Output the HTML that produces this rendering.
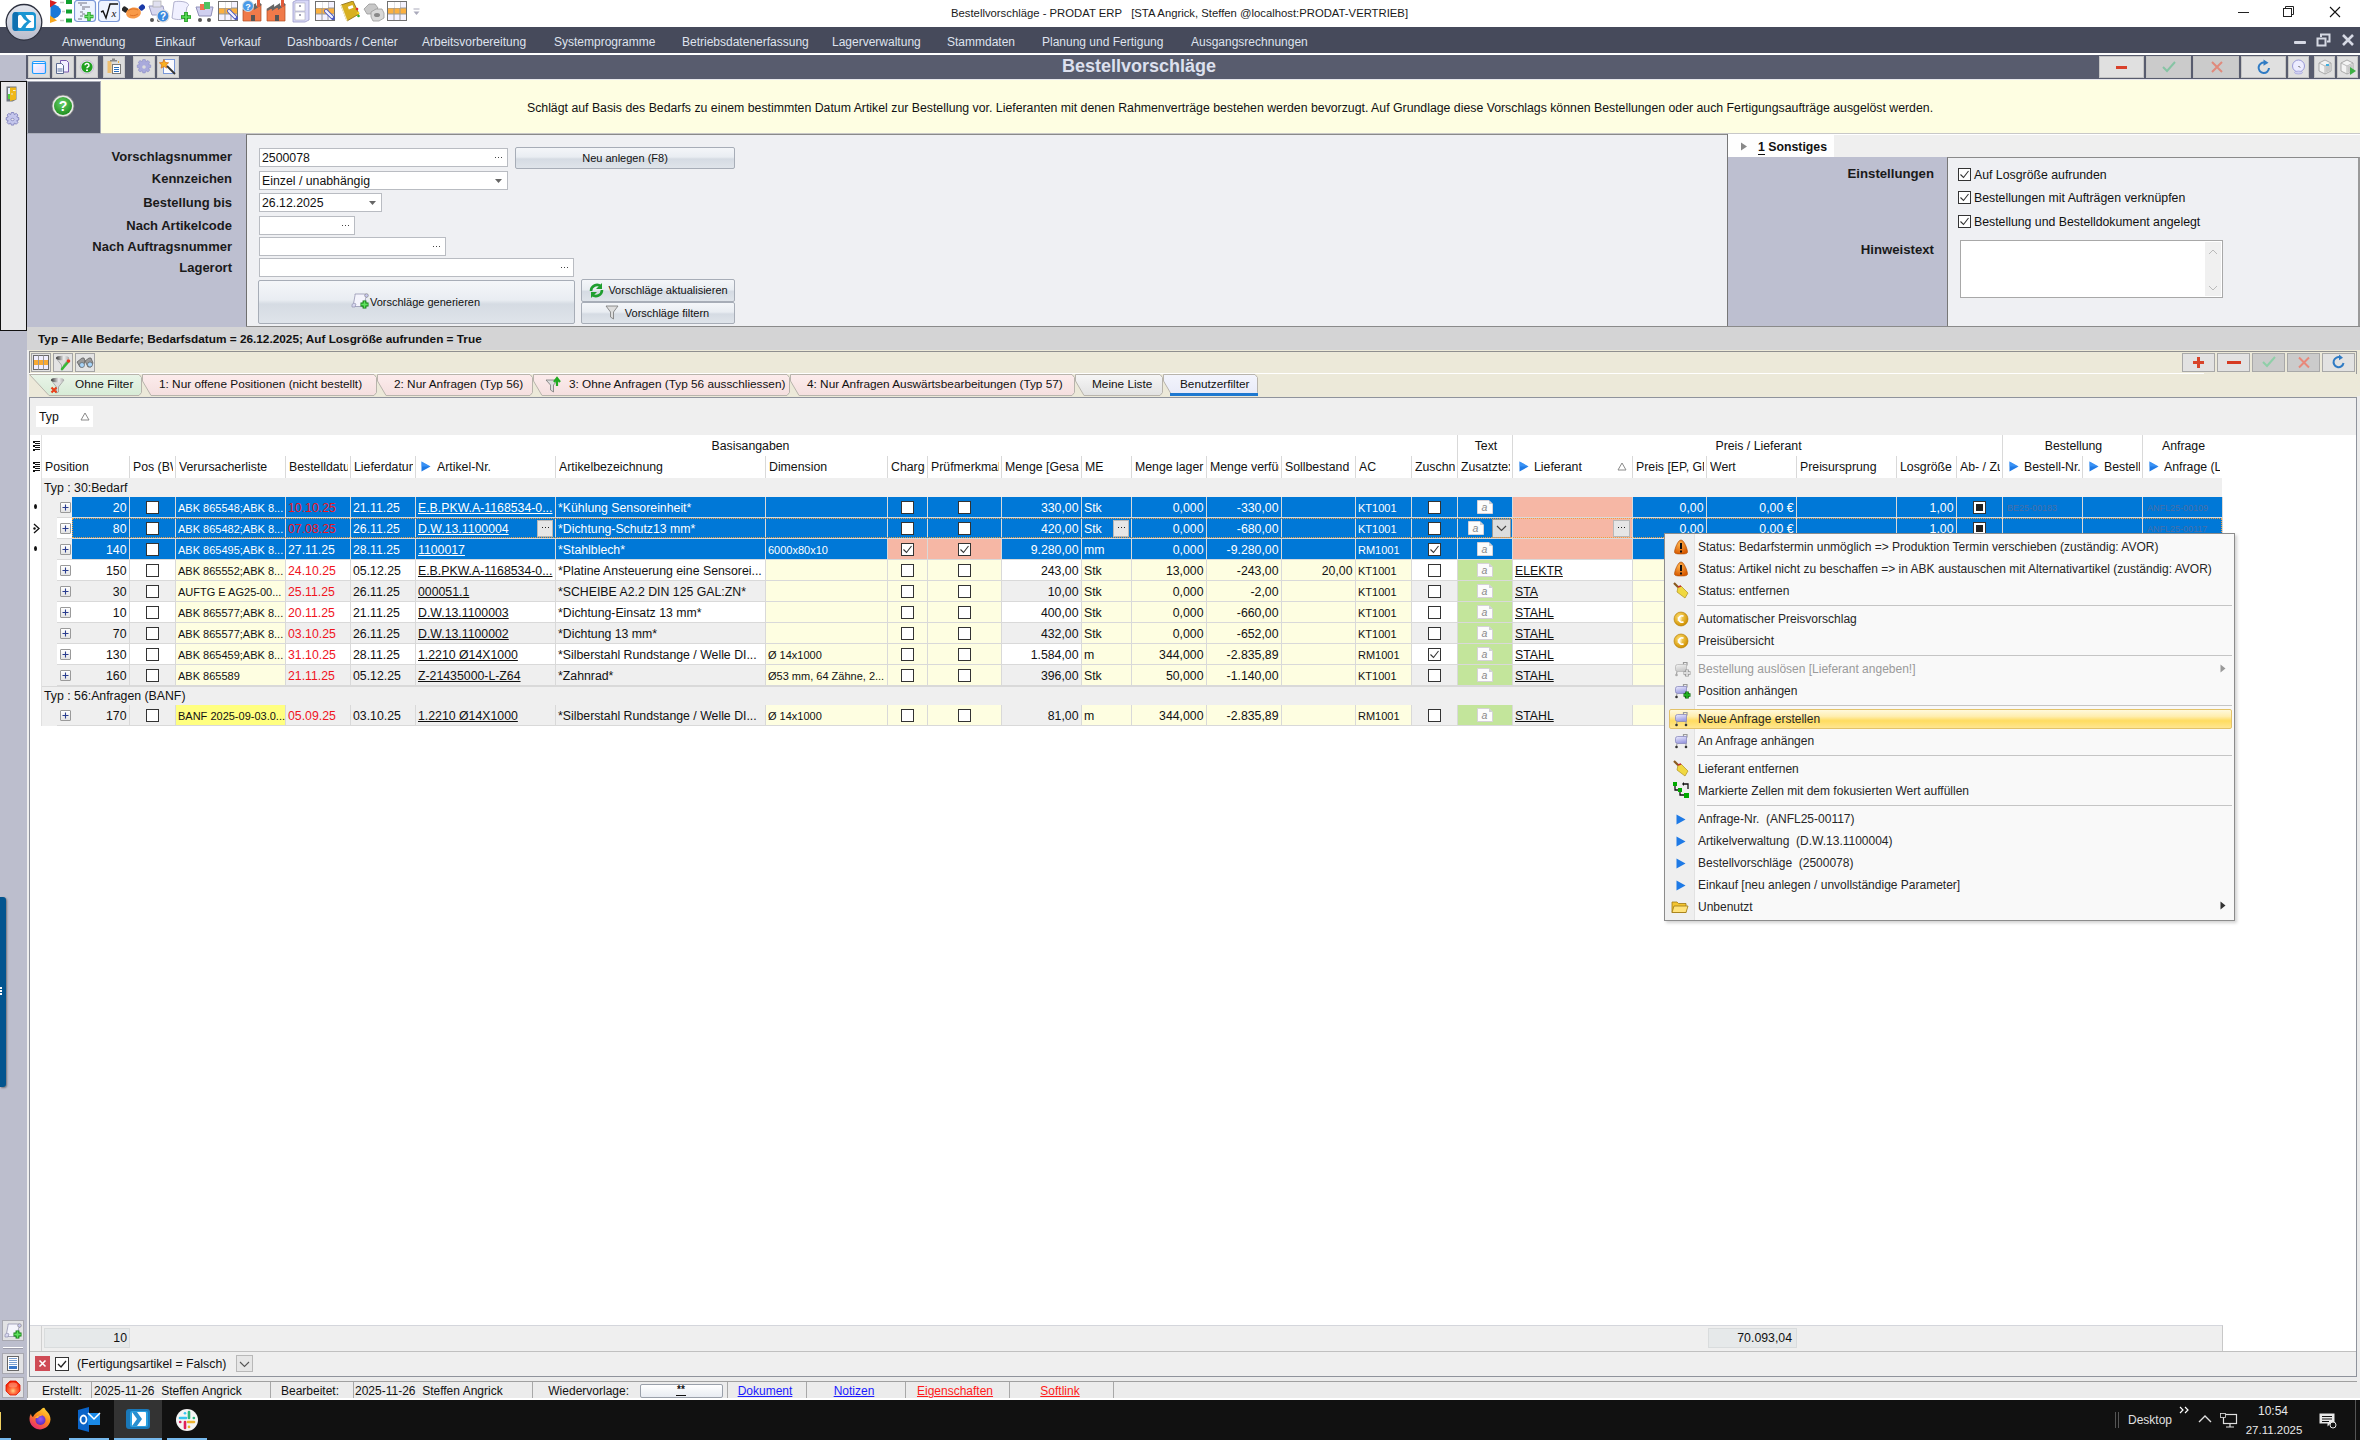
<!DOCTYPE html><html><head><meta charset="utf-8"><style>
html,body{margin:0;padding:0;}
body{width:2360px;height:1440px;overflow:hidden;position:relative;background:#fff;font-family:"Liberation Sans",sans-serif;}
div{position:absolute;box-sizing:border-box;}
</style></head><body>
<div style="left:0px;top:0px;width:2360px;height:27px;background:#fff;"></div>
<div style="left:0px;top:27px;width:2360px;height:26px;background:#464a5b;"></div>
<div style="left:0px;top:53px;width:2360px;height:2px;background:#fff;"></div>
<div style="left:0px;top:55px;width:26px;height:25px;background:#bcbecd;"></div>
<div style="left:26px;top:55px;width:2334px;height:25px;background:#585c6e;"></div>
<div style="left:26px;top:79px;width:2334px;height:1px;background:#e8e8ec;"></div>
<div style="left:951px;top:4.80px;height:16px;line-height:16px;font-size:11.3px;color:#1a1a1a;font-weight:400;white-space:pre;">Bestellvorschläge - PRODAT ERP   [STA Angrick, Steffen @localhost:PRODAT-VERTRIEB]</div>
<div style="left:2238px;top:12px;width:11px;height:1px;background:#222;"></div>
<svg style="position:absolute;left:2282px;top:5px;" width="14" height="14" viewBox="0 0 14 14"><rect x="1.5" y="3.5" width="8" height="8" fill="none" stroke="#222"/><path d="M3.5 3.5V1.5h8v8h-2" fill="none" stroke="#222"/></svg>
<svg style="position:absolute;left:2329px;top:6px;" width="12" height="12" viewBox="0 0 12 12"><path d="M1 1L11 11M11 1L1 11" stroke="#111" stroke-width="1.1"/></svg>
<div style="left:62px;top:34.10px;height:17px;line-height:17px;font-size:12px;color:#dfe3ee;font-weight:400;white-space:pre;">Anwendung</div>
<div style="left:155px;top:34.10px;height:17px;line-height:17px;font-size:12px;color:#dfe3ee;font-weight:400;white-space:pre;">Einkauf</div>
<div style="left:220px;top:34.10px;height:17px;line-height:17px;font-size:12px;color:#dfe3ee;font-weight:400;white-space:pre;">Verkauf</div>
<div style="left:287px;top:34.10px;height:17px;line-height:17px;font-size:12px;color:#dfe3ee;font-weight:400;white-space:pre;">Dashboards / Center</div>
<div style="left:422px;top:34.10px;height:17px;line-height:17px;font-size:12px;color:#dfe3ee;font-weight:400;white-space:pre;">Arbeitsvorbereitung</div>
<div style="left:554px;top:34.10px;height:17px;line-height:17px;font-size:12px;color:#dfe3ee;font-weight:400;white-space:pre;">Systemprogramme</div>
<div style="left:682px;top:34.10px;height:17px;line-height:17px;font-size:12px;color:#dfe3ee;font-weight:400;white-space:pre;">Betriebsdatenerfassung</div>
<div style="left:832px;top:34.10px;height:17px;line-height:17px;font-size:12px;color:#dfe3ee;font-weight:400;white-space:pre;">Lagerverwaltung</div>
<div style="left:947px;top:34.10px;height:17px;line-height:17px;font-size:12px;color:#dfe3ee;font-weight:400;white-space:pre;">Stammdaten</div>
<div style="left:1042px;top:34.10px;height:17px;line-height:17px;font-size:12px;color:#dfe3ee;font-weight:400;white-space:pre;">Planung und Fertigung</div>
<div style="left:1191px;top:34.10px;height:17px;line-height:17px;font-size:12px;color:#dfe3ee;font-weight:400;white-space:pre;">Ausgangsrechnungen</div>
<div style="left:2294px;top:41px;width:12px;height:3px;background:#d6d9e4;border-radius:1px;"></div>
<svg style="position:absolute;left:2316px;top:33px;" width="15" height="14" viewBox="0 0 15 14"><rect x="1.5" y="5.5" width="8" height="7" fill="none" stroke="#d6d9e4" stroke-width="2"/><path d="M5 4V1.5h8.5v7H11" fill="none" stroke="#d6d9e4" stroke-width="2"/></svg>
<svg style="position:absolute;left:2341px;top:33px;" width="14" height="14" viewBox="0 0 14 14"><path d="M2 2L12 12M12 2L2 12" stroke="#d6d9e4" stroke-width="2.6"/></svg>
<svg style="position:absolute;left:4px;top:2px;" width="40" height="40" viewBox="0 0 40 40"><defs><linearGradient id="lg" x1="0" y1="0" x2="0" y2="1"><stop offset="0" stop-color="#e4e7ef"/><stop offset="1" stop-color="#b8bccb"/></linearGradient></defs><circle cx="20" cy="20.3" r="17.8" fill="url(#lg)" stroke="#2e3240" stroke-width="1.3"/><rect x="8.5" y="10" width="23.5" height="19" rx="4" fill="#1a95d2"/><rect x="8.5" y="10" width="6" height="19" rx="3" fill="#0f70b0"/><rect x="14" y="13" width="16" height="13" rx="1.5" fill="#fff"/><path d="M17 13h4.5Q23 17 27.5 19.5Q23 22 21.5 26H17Q19 22 23 19.5Q19 17 17 13z" fill="#1a95d2"/></svg>
<div style="left:139px;width:2000px;text-align:center;top:54.30px;height:25px;line-height:25px;font-size:18px;color:#dde0ee;font-weight:700;white-space:pre;">Bestellvorschläge</div>
<div style="left:0px;top:80px;width:27px;height:1320px;background:#bcbecd;"></div>
<div style="left:0px;top:81px;width:27px;height:250px;background:#e9e9eb;border:1px solid #111;border-bottom:1px solid #111;"></div>
<svg style="position:absolute;left:6px;top:86px;" width="12" height="16" viewBox="0 0 12 16"><path d="M0.5 0.5h10v13l-4 2h-6z" fill="#707680"/><rect x="2" y="2" width="3" height="6" fill="#e8f4ff"/><rect x="2" y="8" width="3" height="5" fill="#50d040"/><path d="M4 1.5h6v12l-6 1.5z" fill="#f0b818"/><rect x="7" y="4" width="2.5" height="1" fill="#f8f0d0"/><circle cx="6" cy="8" r="0.8" fill="#e8e8f0"/></svg>
<svg style="position:absolute;left:5px;top:112px;" width="15" height="15" viewBox="0 0 15 15"><g transform="translate(7.5 7.5)"><path d="M-1.2 -7h2.4l.6 2 2-1.1 1.6 1.6-1.1 2 2 .6v2.4l-2 .6 1.1 2-1.6 1.6-2-1.1-.6 2h-2.4l-.6-2-2 1.1-1.6-1.6 1.1-2-2-.6v-2.4l2-.6-1.1-2 1.6-1.6 2 1.1z" fill="#c4c6ec" stroke="#6a6cb0" stroke-width="0.7"/><ellipse rx="1.6" ry="1.2" fill="#e9e9eb" stroke="#6a6cb0" stroke-width="0.6"/></g></svg>
<div style="left:28px;top:56px;width:22px;height:22px;background:#dcdcdc;border:1px solid #c8c8c8;"></div>
<div style="left:52px;top:56px;width:22px;height:22px;background:#dcdcdc;border:1px solid #c8c8c8;"></div>
<div style="left:76px;top:56px;width:22px;height:22px;background:#dcdcdc;border:1px solid #c8c8c8;"></div>
<div style="left:103px;top:56px;width:22px;height:22px;background:#dcdcdc;border:1px solid #c8c8c8;"></div>
<div style="left:133px;top:56px;width:22px;height:22px;background:#dcdcdc;border:1px solid #c8c8c8;"></div>
<div style="left:157px;top:56px;width:22px;height:22px;background:#dcdcdc;border:1px solid #c8c8c8;"></div>
<svg style="position:absolute;left:31px;top:59px;" width="16" height="16" viewBox="0 0 16 16"><defs><linearGradient id="wf" x1="0" y1="0" x2="1" y2="1"><stop offset="0" stop-color="#ffffff"/><stop offset="1" stop-color="#dcd4ff"/></linearGradient></defs><rect x="1.5" y="2.5" width="13" height="12" rx="1.5" fill="url(#wf)" stroke="#1e9cff" stroke-width="1.2"/><path d="M2 4.5h12" stroke="#1e9cff" stroke-width="1"/></svg>
<svg style="position:absolute;left:55px;top:59px;" width="16" height="16" viewBox="0 0 16 16"><path d="M5.5 1.5h6l2 2v9.5h-8z" fill="#f4f0ff" stroke="#7a5ab0" stroke-width="1"/><path d="M1.5 4.5h5l2 2v8h-7z" fill="#fafaff" stroke="#5a6a90" stroke-width="1"/><rect x="2.5" y="9" width="5" height="4" fill="#a8b4d0"/></svg>
<svg style="position:absolute;left:79px;top:59px;" width="16" height="16" viewBox="0 0 16 16"><circle cx="8" cy="8" r="6.8" fill="#e8e0f0" stroke="#b8a8c8" stroke-width="0.6"/><circle cx="8" cy="8" r="5.6" fill="#21a121"/><path d="M6 6.3a2 1.8 0 1 1 2.8 1.7c-.6.3-.8.6-.8 1.3" fill="none" stroke="#fff" stroke-width="1.5"/><rect x="7" y="10.5" width="2" height="1.5" fill="#fff"/></svg>
<svg style="position:absolute;left:106px;top:58px;" width="17" height="17" viewBox="0 0 17 17"><rect x="1.5" y="3" width="4" height="12" fill="#f0c070"/><rect x="4" y="2" width="7" height="1.5" fill="#888"/><rect x="6" y="0.5" width="3" height="2" fill="#888"/><rect x="12" y="3" width="1" height="2" fill="#f0b040"/><rect x="6.5" y="6.5" width="8" height="9" fill="#fff" stroke="#777" stroke-width="1"/><path d="M8 9.5h5M8 11.5h5M8 13.5h5" stroke="#2a70c0" stroke-width="1"/></svg>
<svg style="position:absolute;left:135px;top:58px;" width="18" height="18" viewBox="0 0 18 18"><g transform="translate(9 9)"><path d="M-1.2 -7.5h2.4l.6 2.2 2.2-1.2 1.7 1.7-1.2 2.2 2.2.6v2.4l-2.2.6 1.2 2.2-1.7 1.7-2.2-1.2-.6 2.2h-2.4l-.6-2.2-2.2 1.2-1.7-1.7 1.2-2.2-2.2-.6v-2.4l2.2-.6-1.2-2.2 1.7-1.7 2.2 1.2z" fill="#a9aadc" stroke="#8a8cc4" stroke-width="0.6"/><circle r="1.8" fill="#dcdcdc"/></g></svg>
<svg style="position:absolute;left:159px;top:58px;" width="18" height="18" viewBox="0 0 18 18"><rect x="4.5" y="1.5" width="11" height="14" fill="#fbfbff" stroke="#7a98d8" stroke-width="1"/><path d="M5 1.5l1.4 3 3.2.3-2.4 2.1.7 3.2L5 8.5l-2.9 1.6.7-3.2L0.4 4.8l3.2-.3z" fill="#f8b020" stroke="#d86a10" stroke-width="0.7"/><path d="M8 8l8 8" stroke="#333" stroke-width="1.8"/></svg>
<div style="left:2099px;top:56px;width:45px;height:22px;background:#e0e0e0;border:1px solid #c4c4c4;"></div>
<div style="left:2146px;top:56px;width:45px;height:22px;background:#cbcbcb;border:1px solid #c4c4c4;"></div>
<div style="left:2193px;top:56px;width:46px;height:22px;background:#cbcbcb;border:1px solid #c4c4c4;"></div>
<div style="left:2241px;top:56px;width:45px;height:22px;background:#e0e0e0;border:1px solid #c4c4c4;"></div>
<div style="left:2288px;top:56px;width:21px;height:22px;background:#e0e0e0;border:1px solid #c4c4c4;"></div>
<div style="left:2314px;top:56px;width:21px;height:22px;background:#e0e0e0;border:1px solid #c4c4c4;"></div>
<div style="left:2337px;top:56px;width:21px;height:22px;background:#e0e0e0;border:1px solid #c4c4c4;"></div>
<div style="left:2116px;top:66px;width:11px;height:3px;background:#d9412b;"></div>
<svg style="position:absolute;left:2161px;top:60px;" width="16" height="14" viewBox="0 0 16 14"><path d="M2 7l4 4 8-9" fill="none" stroke="#86c4a4" stroke-width="2"/></svg>
<svg style="position:absolute;left:2210px;top:60px;" width="14" height="14" viewBox="0 0 14 14"><path d="M2 2L12 12M12 2L2 12" stroke="#e08a7c" stroke-width="2"/></svg>
<svg style="position:absolute;left:2256px;top:59px;" width="16" height="16" viewBox="0 0 16 16"><path d="M13 9A5.2 5.2 0 1 1 8.5 3.6" fill="none" stroke="#2f7bc4" stroke-width="2"/><path d="M7.5 0.5l5 3.2-5 3z" fill="#2f7bc4"/></svg>
<svg style="position:absolute;left:2291px;top:59px;" width="15" height="16" viewBox="0 0 15 16"><circle cx="7.5" cy="7" r="6" fill="#ececff" stroke="#9a9ad8" stroke-width="1"/><path d="M7.5 7l1.5 1.5" stroke="#444" stroke-width="1"/><ellipse cx="7.5" cy="13.5" rx="4" ry="1.5" fill="#d0d0f0" stroke="#9a9ad8" stroke-width="0.6"/></svg>
<svg style="position:absolute;left:2316px;top:58px;" width="18" height="18" viewBox="0 0 18 18"><path d="M3 5l6-3 6 3v8l-6 3-6-3z" fill="#f4f4f4" stroke="#999" stroke-width="0.8"/><path d="M3 5l6 3 6-3M9 8v8" fill="none" stroke="#aaa" stroke-width="0.8"/><path d="M9.5 8.5l5-2.5v6.5l-5 2.5z" fill="#c8c8c8"/><rect x="10" y="6" width="3" height="2" fill="#40b0e0"/></svg>
<svg style="position:absolute;left:2339px;top:58px;" width="19" height="18" viewBox="0 0 19 18"><path d="M2 5l6-3 6 3v8l-6 3-6-3z" fill="#f4f4f4" stroke="#999" stroke-width="0.8"/><path d="M2 5l6 3 6-3M8 8v8" fill="none" stroke="#aaa" stroke-width="0.8"/><path d="M8.5 8.5l5-2.5v6.5l-5 2.5z" fill="#c8c8c8"/><path d="M11 9v8l6-4z" fill="#3cb044"/></svg>
<div style="left:27px;top:81px;width:74px;height:53px;background:#585c6e;border:1px solid #a9acb8;"></div>
<svg style="position:absolute;left:51px;top:94px;" width="24" height="24" viewBox="0 0 24 24"><defs><radialGradient id="hg" cx="45%" cy="35%" r="65%"><stop offset="0" stop-color="#6ad06a"/><stop offset="1" stop-color="#1f8f1f"/></radialGradient></defs><circle cx="12" cy="12" r="11" fill="#e8e8e8" stroke="#777" stroke-width="0.8"/><circle cx="12" cy="12" r="9" fill="url(#hg)"/><text x="12" y="17" font-size="14" font-weight="700" fill="#fff" text-anchor="middle" font-family="Liberation Sans">?</text></svg>
<div style="left:101px;top:80px;width:2259px;height:54px;background:#fefee2;"></div>
<div style="left:101px;top:133px;width:2259px;height:1px;background:#c8c8c8;"></div>
<div style="left:230px;width:2000px;text-align:center;top:100.30px;height:17px;line-height:17px;font-size:12.3px;color:#111;font-weight:400;white-space:pre;">Schlägt auf Basis des Bedarfs zu einem bestimmten Datum Artikel zur Bestellung vor. Lieferanten mit denen Rahmenverträge bestehen werden bevorzugt. Auf Grundlage diese Vorschlags können Bestellungen oder auch Fertigungsaufträge ausgelöst werden.</div>
<div style="left:27px;top:134px;width:220px;height:193px;background:#bdbfd0;"></div>
<div style="left:246px;top:134px;width:1482px;height:193px;background:#eff0f3;border-left:1px solid #6f6f6f;border-top:1px solid #8a8a8a;"></div>
<div style="left:-768px;width:1000px;text-align:right;top:148.30px;height:18px;line-height:18px;font-size:13px;color:#1a1a1a;font-weight:700;white-space:pre;">Vorschlagsnummer</div>
<div style="left:-768px;width:1000px;text-align:right;top:169.80px;height:18px;line-height:18px;font-size:13px;color:#1a1a1a;font-weight:700;white-space:pre;">Kennzeichen</div>
<div style="left:-768px;width:1000px;text-align:right;top:193.80px;height:18px;line-height:18px;font-size:13px;color:#1a1a1a;font-weight:700;white-space:pre;">Bestellung bis</div>
<div style="left:-768px;width:1000px;text-align:right;top:216.80px;height:18px;line-height:18px;font-size:13px;color:#1a1a1a;font-weight:700;white-space:pre;">Nach Artikelcode</div>
<div style="left:-768px;width:1000px;text-align:right;top:237.80px;height:18px;line-height:18px;font-size:13px;color:#1a1a1a;font-weight:700;white-space:pre;">Nach Auftragsnummer</div>
<div style="left:-768px;width:1000px;text-align:right;top:258.80px;height:18px;line-height:18px;font-size:13px;color:#1a1a1a;font-weight:700;white-space:pre;">Lagerort</div>
<div style="left:259px;top:148px;width:249px;height:19px;background:#fff;border:1px solid #b9bcc2;"></div>
<div style="left:495px;top:157px;width:1px;height:1px;background:#444;"></div>
<div style="left:498px;top:157px;width:1px;height:1px;background:#444;"></div>
<div style="left:501px;top:157px;width:1px;height:1px;background:#444;"></div>
<div style="left:262px;top:149.80px;height:17px;line-height:17px;font-size:12.3px;color:#111;font-weight:400;white-space:pre;">2500078</div>
<div style="left:259px;top:171px;width:249px;height:19px;background:#fff;border:1px solid #b9bcc2;"></div>
<svg style="position:absolute;left:495px;top:178.5px;" width="8" height="5" viewBox="0 0 8 5"><path d="M0 0h7L3.5 4z" fill="#666"/></svg>
<div style="left:262px;top:172.80px;height:17px;line-height:17px;font-size:12.3px;color:#111;font-weight:400;white-space:pre;">Einzel / unabhängig</div>
<div style="left:259px;top:193px;width:123px;height:19px;background:#fff;border:1px solid #b9bcc2;"></div>
<svg style="position:absolute;left:369px;top:200.5px;" width="8" height="5" viewBox="0 0 8 5"><path d="M0 0h7L3.5 4z" fill="#666"/></svg>
<div style="left:262px;top:194.80px;height:17px;line-height:17px;font-size:12.3px;color:#111;font-weight:400;white-space:pre;">26.12.2025</div>
<div style="left:259px;top:216px;width:96px;height:19px;background:#fff;border:1px solid #b9bcc2;"></div>
<div style="left:342px;top:225px;width:1px;height:1px;background:#444;"></div>
<div style="left:345px;top:225px;width:1px;height:1px;background:#444;"></div>
<div style="left:348px;top:225px;width:1px;height:1px;background:#444;"></div>
<div style="left:259px;top:237px;width:187px;height:19px;background:#fff;border:1px solid #b9bcc2;"></div>
<div style="left:433px;top:246px;width:1px;height:1px;background:#444;"></div>
<div style="left:436px;top:246px;width:1px;height:1px;background:#444;"></div>
<div style="left:439px;top:246px;width:1px;height:1px;background:#444;"></div>
<div style="left:259px;top:258px;width:315px;height:19px;background:#fff;border:1px solid #b9bcc2;"></div>
<div style="left:561px;top:267px;width:1px;height:1px;background:#444;"></div>
<div style="left:564px;top:267px;width:1px;height:1px;background:#444;"></div>
<div style="left:567px;top:267px;width:1px;height:1px;background:#444;"></div>
<div style="left:515px;top:147px;width:220px;height:22px;background:linear-gradient(#f4f6f9 0%,#e9edf2 45%,#d5dbe3 55%,#dfe4ea 100%);border:1px solid #a7adb7;border-radius:2px;"></div>
<div style="left:-375px;width:2000px;text-align:center;top:150.80px;height:15px;line-height:15px;font-size:11px;color:#111;font-weight:400;white-space:pre;">Neu anlegen (F8)</div>
<div style="left:258px;top:280px;width:317px;height:44px;background:linear-gradient(#f4f6f9 0%,#e9edf2 45%,#d5dbe3 55%,#dfe4ea 100%);border:1px solid #a7adb7;border-radius:2px;"></div>
<div style="left:-575px;width:2000px;text-align:center;top:294.80px;height:15px;line-height:15px;font-size:11px;color:#111;font-weight:400;white-space:pre;">Vorschläge generieren</div>
<svg style="position:absolute;left:351px;top:292px;" width="19" height="17" viewBox="0 0 19 17"><path d="M4 2h9c2 0 3 1 2.5 3l-1 1.5-1 8H2l2-11z" fill="#f4f4fc" stroke="#8888a8" stroke-width="0.7"/><path d="M1 13c0-2 3-2 4-1l-1 3H1z" fill="#d8d8f0" stroke="#8888a8" stroke-width="0.6"/><circle cx="15.5" cy="3.5" r="1.8" fill="#c8c8f0" stroke="#777" stroke-width="0.6"/><path d="M13.5 8.5v8M9.5 12.5h8" stroke="#0a7a0a" stroke-width="3.8"/><path d="M13.5 9.2v6.6M10.2 12.5h6.6" stroke="#5fe05f" stroke-width="1.8"/></svg>
<div style="left:581px;top:279px;width:154px;height:23px;background:linear-gradient(#f4f6f9 0%,#e9edf2 45%,#d5dbe3 55%,#dfe4ea 100%);border:1px solid #a7adb7;border-radius:2px;"></div>
<div style="left:-332px;width:2000px;text-align:center;top:283.30px;height:15px;line-height:15px;font-size:11px;color:#111;font-weight:400;white-space:pre;">Vorschläge aktualisieren</div>
<svg style="position:absolute;left:588px;top:282px;" width="17" height="17" viewBox="0 0 17 17"><path d="M3 9a6 6 0 0 1 10-4.5" fill="none" stroke="#1f9e2f" stroke-width="2.6"/><path d="M14 1v6H8z" fill="#1f9e2f"/><path d="M14 8a6 6 0 0 1-10 4.5" fill="none" stroke="#1f9e2f" stroke-width="2.6"/><path d="M3 16v-6h6z" fill="#1f9e2f"/></svg>
<div style="left:581px;top:302px;width:154px;height:22px;background:linear-gradient(#f4f6f9 0%,#e9edf2 45%,#d5dbe3 55%,#dfe4ea 100%);border:1px solid #a7adb7;border-radius:2px;"></div>
<div style="left:-333px;width:2000px;text-align:center;top:305.80px;height:15px;line-height:15px;font-size:11px;color:#111;font-weight:400;white-space:pre;">Vorschläge filtern</div>
<svg style="position:absolute;left:605px;top:304px;" width="14" height="16" viewBox="0 0 14 16"><path d="M1 2h12l-4.5 6v7l-3-2V8z" fill="#ddd" stroke="#777" stroke-width="0.8"/></svg>
<div style="left:1728px;top:135px;width:632px;height:192px;background:#efefef;"></div>
<div style="left:1727px;top:134px;width:1px;height:193px;background:#777;"></div>
<div style="left:1728px;top:135px;width:106px;height:22px;background:#fefefe;"></div>
<svg style="position:absolute;left:1740px;top:142px;" width="8" height="9" viewBox="0 0 8 9"><path d="M1 0.5l6 4-6 4z" fill="#888"/></svg>
<div style="left:1758px;top:139.30px;height:17px;line-height:17px;font-size:12.3px;color:#111;font-weight:700;white-space:pre;">1 Sonstiges</div>
<div style="left:1758px;top:154px;width:7px;height:1px;background:#111;"></div>
<div style="left:1728px;top:157px;width:220px;height:170px;background:#bdbfd0;"></div>
<div style="left:1947px;top:157px;width:413px;height:170px;background:#eff0f3;border-left:1px solid #777;border-top:1px solid #8a8a8a;border-right:2px solid #9a9a9a;"></div>
<div style="left:934px;width:1000px;text-align:right;top:164.80px;height:18px;line-height:18px;font-size:13.2px;color:#1a1a1a;font-weight:700;white-space:pre;">Einstellungen</div>
<div style="left:934px;width:1000px;text-align:right;top:240.80px;height:18px;line-height:18px;font-size:13.2px;color:#1a1a1a;font-weight:700;white-space:pre;">Hinweistext</div>
<div style="left:1958px;top:168px;width:13px;height:13px;background:#fff;border:1px solid #333;"></div>
<svg style="position:absolute;left:1959px;top:169px;" width="11" height="11" viewBox="0 0 11 11"><path d="M1.5 5.5l3 3 5-6.5" fill="none" stroke="#333" stroke-width="1.1"/></svg>
<div style="left:1974px;top:166.80px;height:17px;line-height:17px;font-size:12.3px;color:#111;font-weight:400;white-space:pre;">Auf Losgröße aufrunden</div>
<div style="left:1958px;top:191px;width:13px;height:13px;background:#fff;border:1px solid #333;"></div>
<svg style="position:absolute;left:1959px;top:192px;" width="11" height="11" viewBox="0 0 11 11"><path d="M1.5 5.5l3 3 5-6.5" fill="none" stroke="#333" stroke-width="1.1"/></svg>
<div style="left:1974px;top:189.80px;height:17px;line-height:17px;font-size:12.3px;color:#111;font-weight:400;white-space:pre;">Bestellungen mit Aufträgen verknüpfen</div>
<div style="left:1958px;top:215px;width:13px;height:13px;background:#fff;border:1px solid #333;"></div>
<svg style="position:absolute;left:1959px;top:216px;" width="11" height="11" viewBox="0 0 11 11"><path d="M1.5 5.5l3 3 5-6.5" fill="none" stroke="#333" stroke-width="1.1"/></svg>
<div style="left:1974px;top:213.80px;height:17px;line-height:17px;font-size:12.3px;color:#111;font-weight:400;white-space:pre;">Bestellung und Bestelldokument angelegt</div>
<div style="left:1960px;top:240px;width:263px;height:58px;background:#fff;border:1px solid #a8a8a8;"></div>
<div style="left:2205px;top:242px;width:16px;height:54px;background:#f0f0f0;"></div>
<svg style="position:absolute;left:2207px;top:248px;" width="12" height="8" viewBox="0 0 12 8"><path d="M2 6l4-4 4 4" fill="none" stroke="#bbb"/></svg>
<svg style="position:absolute;left:2207px;top:284px;" width="12" height="8" viewBox="0 0 12 8"><path d="M2 2l4 4 4-4" fill="none" stroke="#bbb"/></svg>
<div style="left:246px;top:326px;width:2114px;height:1px;background:#8a8a8a;"></div>
<div style="left:27px;top:327px;width:2333px;height:23px;background:#d4d4d5;"></div>
<div style="left:38px;top:330.80px;height:17px;line-height:17px;font-size:11.8px;color:#111;font-weight:700;white-space:pre;">Typ = Alle Bedarfe; Bedarfsdatum = 26.12.2025; Auf Losgröße aufrunden = True</div>
<div style="left:27px;top:350px;width:2333px;height:24px;background:#ece9d9;"></div>
<div style="left:27px;top:350px;width:2px;height:1030px;background:#efefef;"></div>
<div style="left:29px;top:351px;width:2328px;height:1px;background:#8f8f8f;"></div>
<div style="left:29px;top:351px;width:1px;height:23px;background:#8f8f8f;"></div>
<div style="left:29px;top:373px;width:2175px;height:1px;background:#ffffff;"></div>
<div style="left:31px;top:353px;width:20px;height:19px;background:#e3e3e3;border:1px solid #a4a4a4;"></div>
<div style="left:53px;top:353px;width:20px;height:19px;background:#e3e3e3;border:1px solid #a4a4a4;"></div>
<div style="left:75px;top:353px;width:20px;height:19px;background:#e3e3e3;border:1px solid #a4a4a4;"></div>
<svg style="position:absolute;left:33px;top:355px;" width="16" height="15" viewBox="0 0 16 15"><rect x="0.5" y="0.5" width="15" height="14" fill="#f0eeff" stroke="#6a6a6a" stroke-width="1"/><rect x="1" y="5" width="14" height="5" fill="#f9aa33"/><path d="M5.5 0.5v14M10.5 0.5v14" stroke="#9a9a9a" stroke-width="1"/></svg>
<svg style="position:absolute;left:55px;top:355px;" width="16" height="16" viewBox="0 0 16 16"><defs><linearGradient id="fn" x1="0" y1="0" x2="1" y2="0"><stop offset="0" stop-color="#333"/><stop offset="0.6" stop-color="#eee"/><stop offset="1" stop-color="#aaa"/></linearGradient></defs><path d="M1 3L6.5 10v5l2-1V10L14 3z" fill="#ddd" stroke="#888" stroke-width="0.6"/><ellipse cx="7.5" cy="3" rx="6.5" ry="2.3" fill="url(#fn)"/><path d="M7 14l6-7" stroke="#38b838" stroke-width="2.6" stroke-linecap="round"/><circle cx="13.5" cy="6" r="1.8" fill="#e83a20"/></svg>
<svg style="position:absolute;left:76px;top:356px;" width="18" height="13" viewBox="0 0 18 13"><path d="M1 6l5-4h2l1 3-2 6H4z" fill="#9a9a9a" stroke="#555" stroke-width="0.7"/><path d="M9 5l4-3h2l2 5-2 4h-3z" fill="#9a9a9a" stroke="#555" stroke-width="0.7"/><circle cx="6" cy="9" r="2.5" fill="#a8d4f8" stroke="#555" stroke-width="0.6"/><circle cx="14" cy="8.5" r="2.5" fill="#a8d4f8" stroke="#555" stroke-width="0.6"/></svg>
<div style="left:2182px;top:353px;width:33px;height:19px;background:#e2e2e2;border:1px solid #a8a8a8;"></div>
<div style="left:2217px;top:353px;width:33px;height:19px;background:#e2e2e2;border:1px solid #a8a8a8;"></div>
<div style="left:2252px;top:353px;width:33px;height:19px;background:#cbcbcb;border:1px solid #a8a8a8;"></div>
<div style="left:2287px;top:353px;width:33px;height:19px;background:#cbcbcb;border:1px solid #a8a8a8;"></div>
<div style="left:2322px;top:353px;width:33px;height:19px;background:#e2e2e2;border:1px solid #a8a8a8;"></div>
<div style="left:2356px;top:351px;width:1px;height:23px;background:#9a9a9a;"></div>
<svg style="position:absolute;left:2192px;top:356px;" width="14" height="13" viewBox="0 0 14 13"><path d="M6.5 1v11M1 6.5h11" stroke="#d8442a" stroke-width="3"/></svg>
<div style="left:2227px;top:361px;width:14px;height:3px;background:#d63a22;"></div>
<svg style="position:absolute;left:2261px;top:355px;" width="16" height="14" viewBox="0 0 16 14"><path d="M2 7l4 4 8-9" fill="none" stroke="#8fcfa8" stroke-width="2"/></svg>
<svg style="position:absolute;left:2297px;top:356px;" width="14" height="13" viewBox="0 0 14 13"><path d="M2 1.5L12 11.5M12 1.5L2 11.5" stroke="#e8887a" stroke-width="2"/></svg>
<svg style="position:absolute;left:2331px;top:354px;" width="16" height="16" viewBox="0 0 16 16"><path d="M12.5 9A5 5 0 1 1 9.5 3.5" fill="none" stroke="#2f7bc4" stroke-width="2"/><path d="M8 0.5l4 3.2-4 2.5z" fill="#2f7bc4"/></svg>
<div style="left:29px;top:374px;width:2331px;height:23px;background:#ece9d9;"></div>
<svg style="position:absolute;left:29px;top:374px;" width="127" height="23" viewBox="0 0 127 23"><defs><linearGradient id="tg0" x1="0" y1="0" x2="0" y2="1"><stop offset="0" stop-color="#e9f4e8"/><stop offset="1" stop-color="#d7ebd6"/></linearGradient></defs><path d="M0.5 0.5  H110 L112.5 3.5 V18.5 L110 21.5 H20 Z" fill="url(#tg0)" stroke="#b8b4ac" stroke-width="1"/></svg>
<div style="left:75px;top:375.80px;height:17px;line-height:17px;font-size:11.8px;color:#111;font-weight:400;white-space:pre;">Ohne Filter</div>
<svg style="position:absolute;left:142px;top:374px;" width="249" height="23" viewBox="0 0 249 23"><defs><linearGradient id="tg1" x1="0" y1="0" x2="0" y2="1"><stop offset="0" stop-color="#fcecec"/><stop offset="1" stop-color="#f4dfdf"/></linearGradient></defs><path d="M0.5 7 V0.5 H232 L234.5 3.5 V18.5 L232 21.5 H9 Z" fill="url(#tg1)" stroke="#b8b4ac" stroke-width="1"/></svg>
<div style="left:159px;top:375.80px;height:17px;line-height:17px;font-size:11.8px;color:#111;font-weight:400;white-space:pre;">1: Nur offene Positionen (nicht bestellt)</div>
<svg style="position:absolute;left:377px;top:374px;" width="170" height="23" viewBox="0 0 170 23"><defs><linearGradient id="tg2" x1="0" y1="0" x2="0" y2="1"><stop offset="0" stop-color="#fcecec"/><stop offset="1" stop-color="#f4dfdf"/></linearGradient></defs><path d="M0.5 7 V0.5 H153 L155.5 3.5 V18.5 L153 21.5 H9 Z" fill="url(#tg2)" stroke="#b8b4ac" stroke-width="1"/></svg>
<div style="left:394px;top:375.80px;height:17px;line-height:17px;font-size:11.8px;color:#111;font-weight:400;white-space:pre;">2: Nur Anfragen (Typ 56)</div>
<svg style="position:absolute;left:533px;top:374px;" width="271" height="23" viewBox="0 0 271 23"><defs><linearGradient id="tg3" x1="0" y1="0" x2="0" y2="1"><stop offset="0" stop-color="#fcecec"/><stop offset="1" stop-color="#f4dfdf"/></linearGradient></defs><path d="M0.5 7 V0.5 H254 L256.5 3.5 V18.5 L254 21.5 H9 Z" fill="url(#tg3)" stroke="#b8b4ac" stroke-width="1"/></svg>
<div style="left:569px;top:375.80px;height:17px;line-height:17px;font-size:11.8px;color:#111;font-weight:400;white-space:pre;">3: Ohne Anfragen (Typ 56 ausschliessen)</div>
<svg style="position:absolute;left:790px;top:374px;" width="299" height="23" viewBox="0 0 299 23"><defs><linearGradient id="tg4" x1="0" y1="0" x2="0" y2="1"><stop offset="0" stop-color="#fcecec"/><stop offset="1" stop-color="#f4dfdf"/></linearGradient></defs><path d="M0.5 7 V0.5 H282 L284.5 3.5 V18.5 L282 21.5 H9 Z" fill="url(#tg4)" stroke="#b8b4ac" stroke-width="1"/></svg>
<div style="left:807px;top:375.80px;height:17px;line-height:17px;font-size:11.8px;color:#111;font-weight:400;white-space:pre;">4: Nur Anfragen Auswärtsbearbeitungen (Typ 57)</div>
<svg style="position:absolute;left:1075px;top:374px;" width="102" height="23" viewBox="0 0 102 23"><defs><linearGradient id="tg5" x1="0" y1="0" x2="0" y2="1"><stop offset="0" stop-color="#f6f6f6"/><stop offset="1" stop-color="#e2e2e2"/></linearGradient></defs><path d="M0.5 7 V0.5 H85 L87.5 3.5 V18.5 L85 21.5 H9 Z" fill="url(#tg5)" stroke="#b8b4ac" stroke-width="1"/></svg>
<div style="left:1092px;top:375.80px;height:17px;line-height:17px;font-size:11.8px;color:#111;font-weight:400;white-space:pre;">Meine Liste</div>
<svg style="position:absolute;left:1163px;top:374px;" width="109" height="23" viewBox="0 0 109 23"><defs><linearGradient id="tg6" x1="0" y1="0" x2="0" y2="1"><stop offset="0" stop-color="#f3f4fc"/><stop offset="1" stop-color="#e8eaf8"/></linearGradient></defs><path d="M0.5 7 V0.5 H92 L94.5 3.5 V18.5 L92 21.5 H9 Z" fill="url(#tg6)" stroke="#b8b4ac" stroke-width="1"/></svg>
<div style="left:1180px;top:375.80px;height:17px;line-height:17px;font-size:11.8px;color:#111;font-weight:400;white-space:pre;">Benutzerfilter</div>
<div style="left:1170px;top:393px;width:88px;height:3px;background:#1e78d0;"></div>
<svg style="position:absolute;left:50px;top:377px;" width="15" height="17" viewBox="0 0 15 17"><defs><linearGradient id="fn2" x1="0" y1="0" x2="1" y2="0"><stop offset="0" stop-color="#333"/><stop offset="0.6" stop-color="#eee"/><stop offset="1" stop-color="#aaa"/></linearGradient></defs><path d="M1 3L6.5 10v6l2-1V10L14 3z" fill="#ddd" stroke="#888" stroke-width="0.6"/><ellipse cx="7.5" cy="3" rx="6.5" ry="2.3" fill="url(#fn2)"/><path d="M1.5 10.5l5 5M6.5 10.5l-5 5" stroke="#e8401a" stroke-width="2.2"/></svg>
<svg style="position:absolute;left:545px;top:376px;" width="18" height="17" viewBox="0 0 18 17"><path d="M1 4h12l-4.5 5v7l-3-2V9z" fill="#ddd" stroke="#777" stroke-width="0.8"/><path d="M12 10V4M9 6l3-4 3 4" fill="none" stroke="#1faa1f" stroke-width="2.2"/></svg>
<div style="left:29px;top:397px;width:2328px;height:980px;background:#fff;border:1px solid #8f939c;"></div>
<div style="left:30px;top:398px;width:2326px;height:37px;background:#efefef;"></div>
<div style="left:2357px;top:396px;width:3px;height:985px;background:#ececec;"></div>
<div style="left:36px;top:406px;width:57px;height:21px;background:#fff;"></div>
<div style="left:39px;top:408.80px;height:17px;line-height:17px;font-size:12.3px;color:#111;font-weight:400;white-space:pre;">Typ</div>
<svg style="position:absolute;left:80px;top:412px;" width="10" height="9" viewBox="0 0 10 9"><path d="M5 1L9 8H1z" fill="none" stroke="#8a8a8a" stroke-width="1"/></svg>
<div style="left:41px;top:435px;width:1px;height:291px;background:#e0e0e0;"></div>
<svg style="position:absolute;left:32px;top:441px;" width="8" height="10" viewBox="0 0 8 10"><g fill="#111" shape-rendering="crispEdges"><rect x="1" y="0" width="2" height="2"/><rect x="1" y="4" width="2" height="2"/><rect x="1" y="8" width="2" height="2"/><rect x="3" y="0" width="5" height="1"/><rect x="3" y="2" width="5" height="1"/><rect x="3" y="4" width="5" height="1"/><rect x="3" y="6" width="5" height="1"/><rect x="3" y="8" width="5" height="1"/></g></svg>
<svg style="position:absolute;left:32px;top:462px;" width="8" height="10" viewBox="0 0 8 10"><g fill="#111" shape-rendering="crispEdges"><rect x="1" y="0" width="2" height="2"/><rect x="1" y="4" width="2" height="2"/><rect x="1" y="8" width="2" height="2"/><rect x="3" y="0" width="5" height="1"/><rect x="3" y="2" width="5" height="1"/><rect x="3" y="4" width="5" height="1"/><rect x="3" y="6" width="5" height="1"/><rect x="3" y="8" width="5" height="1"/></g></svg>
<div style="left:-249.5px;width:2000px;text-align:center;top:437.80px;height:17px;line-height:17px;font-size:12.3px;color:#111;font-weight:400;white-space:pre;">Basisangaben</div>
<div style="left:1457px;top:435px;width:1px;height:43px;background:#d9d9d9;"></div>
<div style="left:486.0px;width:2000px;text-align:center;top:437.80px;height:17px;line-height:17px;font-size:12.3px;color:#111;font-weight:400;white-space:pre;">Text</div>
<div style="left:1512px;top:435px;width:1px;height:43px;background:#d9d9d9;"></div>
<div style="left:758.5px;width:2000px;text-align:center;top:437.80px;height:17px;line-height:17px;font-size:12.3px;color:#111;font-weight:400;white-space:pre;">Preis / Lieferant</div>
<div style="left:2002px;top:435px;width:1px;height:43px;background:#d9d9d9;"></div>
<div style="left:1073.5px;width:2000px;text-align:center;top:437.80px;height:17px;line-height:17px;font-size:12.3px;color:#111;font-weight:400;white-space:pre;">Bestellung</div>
<div style="left:2142px;top:435px;width:1px;height:43px;background:#d9d9d9;"></div>
<div style="left:1183.5px;width:2000px;text-align:center;top:437.80px;height:17px;line-height:17px;font-size:12.3px;color:#111;font-weight:400;white-space:pre;">Anfrage</div>
<div style="left:45px;top:456px;width:82px;height:22px;overflow:hidden;"><div style="left:0;top:0;height:22px;line-height:22px;font-size:12.3px;color:#111;white-space:pre;">Position</div></div>
<div style="left:133px;top:456px;width:40px;height:22px;overflow:hidden;"><div style="left:0;top:0;height:22px;line-height:22px;font-size:12.3px;color:#111;white-space:pre;">Pos (BW)</div></div>
<div style="left:179px;top:456px;width:104px;height:22px;overflow:hidden;"><div style="left:0;top:0;height:22px;line-height:22px;font-size:12.3px;color:#111;white-space:pre;">Verursacherliste</div></div>
<div style="left:289px;top:456px;width:59px;height:22px;overflow:hidden;"><div style="left:0;top:0;height:22px;line-height:22px;font-size:12.3px;color:#111;white-space:pre;">Bestelldatum</div></div>
<div style="left:354px;top:456px;width:59px;height:22px;overflow:hidden;"><div style="left:0;top:0;height:22px;line-height:22px;font-size:12.3px;color:#111;white-space:pre;">Lieferdatum</div></div>
<div style="left:437px;top:456px;width:116px;height:22px;overflow:hidden;"><div style="left:0;top:0;height:22px;line-height:22px;font-size:12.3px;color:#111;white-space:pre;">Artikel-Nr.</div></div>
<div style="left:559px;top:456px;width:204px;height:22px;overflow:hidden;"><div style="left:0;top:0;height:22px;line-height:22px;font-size:12.3px;color:#111;white-space:pre;">Artikelbezeichnung</div></div>
<div style="left:769px;top:456px;width:116px;height:22px;overflow:hidden;"><div style="left:0;top:0;height:22px;line-height:22px;font-size:12.3px;color:#111;white-space:pre;">Dimension</div></div>
<div style="left:891px;top:456px;width:34px;height:22px;overflow:hidden;"><div style="left:0;top:0;height:22px;line-height:22px;font-size:12.3px;color:#111;white-space:pre;">Charge</div></div>
<div style="left:931px;top:456px;width:68px;height:22px;overflow:hidden;"><div style="left:0;top:0;height:22px;line-height:22px;font-size:12.3px;color:#111;white-space:pre;">Prüfmerkmal</div></div>
<div style="left:1005px;top:456px;width:74px;height:22px;overflow:hidden;"><div style="left:0;top:0;height:22px;line-height:22px;font-size:12.3px;color:#111;white-space:pre;">Menge [Gesamt]</div></div>
<div style="left:1085px;top:456px;width:44px;height:22px;overflow:hidden;"><div style="left:0;top:0;height:22px;line-height:22px;font-size:12.3px;color:#111;white-space:pre;">ME</div></div>
<div style="left:1135px;top:456px;width:69px;height:22px;overflow:hidden;"><div style="left:0;top:0;height:22px;line-height:22px;font-size:12.3px;color:#111;white-space:pre;">Menge lager</div></div>
<div style="left:1210px;top:456px;width:69px;height:22px;overflow:hidden;"><div style="left:0;top:0;height:22px;line-height:22px;font-size:12.3px;color:#111;white-space:pre;">Menge verfügbar</div></div>
<div style="left:1285px;top:456px;width:68px;height:22px;overflow:hidden;"><div style="left:0;top:0;height:22px;line-height:22px;font-size:12.3px;color:#111;white-space:pre;">Sollbestand</div></div>
<div style="left:1359px;top:456px;width:50px;height:22px;overflow:hidden;"><div style="left:0;top:0;height:22px;line-height:22px;font-size:12.3px;color:#111;white-space:pre;">AC</div></div>
<div style="left:1415px;top:456px;width:40px;height:22px;overflow:hidden;"><div style="left:0;top:0;height:22px;line-height:22px;font-size:12.3px;color:#111;white-space:pre;">Zuschnitt</div></div>
<div style="left:1461px;top:456px;width:49px;height:22px;overflow:hidden;"><div style="left:0;top:0;height:22px;line-height:22px;font-size:12.3px;color:#111;white-space:pre;">Zusatztext</div></div>
<div style="left:1534px;top:456px;width:96px;height:22px;overflow:hidden;"><div style="left:0;top:0;height:22px;line-height:22px;font-size:12.3px;color:#111;white-space:pre;">Lieferant</div></div>
<div style="left:1636px;top:456px;width:68px;height:22px;overflow:hidden;"><div style="left:0;top:0;height:22px;line-height:22px;font-size:12.3px;color:#111;white-space:pre;">Preis [EP, GME]</div></div>
<div style="left:1710px;top:456px;width:84px;height:22px;overflow:hidden;"><div style="left:0;top:0;height:22px;line-height:22px;font-size:12.3px;color:#111;white-space:pre;">Wert</div></div>
<div style="left:1800px;top:456px;width:94px;height:22px;overflow:hidden;"><div style="left:0;top:0;height:22px;line-height:22px;font-size:12.3px;color:#111;white-space:pre;">Preisursprung</div></div>
<div style="left:1900px;top:456px;width:54px;height:22px;overflow:hidden;"><div style="left:0;top:0;height:22px;line-height:22px;font-size:12.3px;color:#111;white-space:pre;">Losgröße</div></div>
<div style="left:1960px;top:456px;width:40px;height:22px;overflow:hidden;"><div style="left:0;top:0;height:22px;line-height:22px;font-size:12.3px;color:#111;white-space:pre;">Ab- / Zu</div></div>
<div style="left:2024px;top:456px;width:56px;height:22px;overflow:hidden;"><div style="left:0;top:0;height:22px;line-height:22px;font-size:12.3px;color:#111;white-space:pre;">Bestell-Nr.</div></div>
<div style="left:2104px;top:456px;width:36px;height:22px;overflow:hidden;"><div style="left:0;top:0;height:22px;line-height:22px;font-size:12.3px;color:#111;white-space:pre;">Bestelldatum</div></div>
<div style="left:2164px;top:456px;width:56px;height:22px;overflow:hidden;"><div style="left:0;top:0;height:22px;line-height:22px;font-size:12.3px;color:#111;white-space:pre;">Anfrage (Lief)</div></div>
<div style="left:129px;top:456px;width:1px;height:22px;background:#d9d9d9;"></div>
<div style="left:175px;top:456px;width:1px;height:22px;background:#d9d9d9;"></div>
<div style="left:285px;top:456px;width:1px;height:22px;background:#d9d9d9;"></div>
<div style="left:350px;top:456px;width:1px;height:22px;background:#d9d9d9;"></div>
<div style="left:415px;top:456px;width:1px;height:22px;background:#d9d9d9;"></div>
<div style="left:555px;top:456px;width:1px;height:22px;background:#d9d9d9;"></div>
<div style="left:765px;top:456px;width:1px;height:22px;background:#d9d9d9;"></div>
<div style="left:887px;top:456px;width:1px;height:22px;background:#d9d9d9;"></div>
<div style="left:927px;top:456px;width:1px;height:22px;background:#d9d9d9;"></div>
<div style="left:1001px;top:456px;width:1px;height:22px;background:#d9d9d9;"></div>
<div style="left:1081px;top:456px;width:1px;height:22px;background:#d9d9d9;"></div>
<div style="left:1131px;top:456px;width:1px;height:22px;background:#d9d9d9;"></div>
<div style="left:1206px;top:456px;width:1px;height:22px;background:#d9d9d9;"></div>
<div style="left:1281px;top:456px;width:1px;height:22px;background:#d9d9d9;"></div>
<div style="left:1355px;top:456px;width:1px;height:22px;background:#d9d9d9;"></div>
<div style="left:1411px;top:456px;width:1px;height:22px;background:#d9d9d9;"></div>
<div style="left:1632px;top:456px;width:1px;height:22px;background:#d9d9d9;"></div>
<div style="left:1706px;top:456px;width:1px;height:22px;background:#d9d9d9;"></div>
<div style="left:1796px;top:456px;width:1px;height:22px;background:#d9d9d9;"></div>
<div style="left:1896px;top:456px;width:1px;height:22px;background:#d9d9d9;"></div>
<div style="left:1956px;top:456px;width:1px;height:22px;background:#d9d9d9;"></div>
<div style="left:2082px;top:456px;width:1px;height:22px;background:#d9d9d9;"></div>
<svg style="position:absolute;left:421px;top:461px;" width="10" height="11" viewBox="0 0 10 11"><path d="M0.5 0.5L9.5 5.5 0.5 10.5z" fill="#1e7ae6"/><path d="M0.5 0.5L9.5 5.5 0.5 5.5z" fill="#4aa0ff" opacity="0.6"/></svg>
<svg style="position:absolute;left:1519px;top:461px;" width="10" height="11" viewBox="0 0 10 11"><path d="M0.5 0.5L9.5 5.5 0.5 10.5z" fill="#1e7ae6"/><path d="M0.5 0.5L9.5 5.5 0.5 5.5z" fill="#4aa0ff" opacity="0.6"/></svg>
<svg style="position:absolute;left:2009px;top:461px;" width="10" height="11" viewBox="0 0 10 11"><path d="M0.5 0.5L9.5 5.5 0.5 10.5z" fill="#1e7ae6"/><path d="M0.5 0.5L9.5 5.5 0.5 5.5z" fill="#4aa0ff" opacity="0.6"/></svg>
<svg style="position:absolute;left:2089px;top:461px;" width="10" height="11" viewBox="0 0 10 11"><path d="M0.5 0.5L9.5 5.5 0.5 10.5z" fill="#1e7ae6"/><path d="M0.5 0.5L9.5 5.5 0.5 5.5z" fill="#4aa0ff" opacity="0.6"/></svg>
<svg style="position:absolute;left:2149px;top:461px;" width="10" height="11" viewBox="0 0 10 11"><path d="M0.5 0.5L9.5 5.5 0.5 10.5z" fill="#1e7ae6"/><path d="M0.5 0.5L9.5 5.5 0.5 5.5z" fill="#4aa0ff" opacity="0.6"/></svg>
<svg style="position:absolute;left:1617px;top:462px;" width="10" height="9" viewBox="0 0 10 9"><path d="M5 1L9 8H1z" fill="none" stroke="#8a8a8a" stroke-width="1"/></svg>
<div style="left:42px;top:478px;width:2180px;height:19px;background:#efefef;"></div>
<div style="left:44px;top:479.80px;height:17px;line-height:17px;font-size:12.3px;color:#111;font-weight:400;white-space:pre;">Typ : 30:Bedarf</div>
<div style="left:57px;top:497px;width:16px;height:21px;background:#efefef;"></div>
<div style="left:72px;top:497px;width:58px;height:21px;background:#0078d7;"></div>
<div style="left:130px;top:497px;width:46px;height:21px;background:#0078d7;"></div>
<div style="left:176px;top:497px;width:110px;height:21px;background:#0078d7;"></div>
<div style="left:286px;top:497px;width:65px;height:21px;background:#0078d7;"></div>
<div style="left:351px;top:497px;width:65px;height:21px;background:#0078d7;"></div>
<div style="left:416px;top:497px;width:140px;height:21px;background:#0078d7;"></div>
<div style="left:556px;top:497px;width:210px;height:21px;background:#0078d7;"></div>
<div style="left:766px;top:497px;width:122px;height:21px;background:#0078d7;"></div>
<div style="left:888px;top:497px;width:40px;height:21px;background:#0078d7;"></div>
<div style="left:928px;top:497px;width:74px;height:21px;background:#0078d7;"></div>
<div style="left:1002px;top:497px;width:80px;height:21px;background:#0078d7;"></div>
<div style="left:1082px;top:497px;width:50px;height:21px;background:#0078d7;"></div>
<div style="left:1132px;top:497px;width:75px;height:21px;background:#0078d7;"></div>
<div style="left:1207px;top:497px;width:75px;height:21px;background:#0078d7;"></div>
<div style="left:1282px;top:497px;width:74px;height:21px;background:#0078d7;"></div>
<div style="left:1356px;top:497px;width:56px;height:21px;background:#0078d7;"></div>
<div style="left:1412px;top:497px;width:46px;height:21px;background:#0078d7;"></div>
<div style="left:1458px;top:497px;width:55px;height:21px;background:#0078d7;"></div>
<div style="left:1513px;top:497px;width:120px;height:21px;background:#f6b7a5;"></div>
<div style="left:1633px;top:497px;width:74px;height:21px;background:#0078d7;"></div>
<div style="left:1707px;top:497px;width:90px;height:21px;background:#0078d7;"></div>
<div style="left:1797px;top:497px;width:100px;height:21px;background:#0078d7;"></div>
<div style="left:1897px;top:497px;width:60px;height:21px;background:#0078d7;"></div>
<div style="left:1957px;top:497px;width:46px;height:21px;background:#0078d7;"></div>
<div style="left:2003px;top:497px;width:80px;height:21px;background:#0078d7;"></div>
<div style="left:2083px;top:497px;width:60px;height:21px;background:#0078d7;"></div>
<div style="left:2143px;top:497px;width:80px;height:21px;background:#0078d7;"></div>
<div style="left:129px;top:497px;width:1px;height:21px;background:#d9d9d9;"></div>
<div style="left:175px;top:497px;width:1px;height:21px;background:#d9d9d9;"></div>
<div style="left:285px;top:497px;width:1px;height:21px;background:#d9d9d9;"></div>
<div style="left:350px;top:497px;width:1px;height:21px;background:#d9d9d9;"></div>
<div style="left:415px;top:497px;width:1px;height:21px;background:#d9d9d9;"></div>
<div style="left:555px;top:497px;width:1px;height:21px;background:#d9d9d9;"></div>
<div style="left:765px;top:497px;width:1px;height:21px;background:#d9d9d9;"></div>
<div style="left:887px;top:497px;width:1px;height:21px;background:#d9d9d9;"></div>
<div style="left:927px;top:497px;width:1px;height:21px;background:#d9d9d9;"></div>
<div style="left:1001px;top:497px;width:1px;height:21px;background:#d9d9d9;"></div>
<div style="left:1081px;top:497px;width:1px;height:21px;background:#d9d9d9;"></div>
<div style="left:1131px;top:497px;width:1px;height:21px;background:#d9d9d9;"></div>
<div style="left:1206px;top:497px;width:1px;height:21px;background:#d9d9d9;"></div>
<div style="left:1281px;top:497px;width:1px;height:21px;background:#d9d9d9;"></div>
<div style="left:1355px;top:497px;width:1px;height:21px;background:#d9d9d9;"></div>
<div style="left:1411px;top:497px;width:1px;height:21px;background:#d9d9d9;"></div>
<div style="left:1457px;top:497px;width:1px;height:21px;background:#d9d9d9;"></div>
<div style="left:1512px;top:497px;width:1px;height:21px;background:#d9d9d9;"></div>
<div style="left:1632px;top:497px;width:1px;height:21px;background:#d9d9d9;"></div>
<div style="left:1706px;top:497px;width:1px;height:21px;background:#d9d9d9;"></div>
<div style="left:1796px;top:497px;width:1px;height:21px;background:#d9d9d9;"></div>
<div style="left:1896px;top:497px;width:1px;height:21px;background:#d9d9d9;"></div>
<div style="left:1956px;top:497px;width:1px;height:21px;background:#d9d9d9;"></div>
<div style="left:2002px;top:497px;width:1px;height:21px;background:#d9d9d9;"></div>
<div style="left:2082px;top:497px;width:1px;height:21px;background:#d9d9d9;"></div>
<div style="left:2142px;top:497px;width:1px;height:21px;background:#d9d9d9;"></div>
<div style="left:2222px;top:497px;width:1px;height:21px;background:#d9d9d9;"></div>
<div style="left:57px;top:517px;width:2165px;height:1px;background:#d9d9d9;"></div>
<div style="left:42px;top:497px;width:15px;height:21px;background:#efefef;"></div>
<div style="left:60px;top:502px;width:11px;height:11px;background:linear-gradient(#fff,#e4e4e4);border:1px solid #9a9a9a;border-radius:1px;"></div>
<svg style="position:absolute;left:61px;top:503px;" width="9" height="9" viewBox="0 0 9 9"><path d="M4.5 1.5v6M1.5 4.5h6" stroke="#2a3d8f" stroke-width="1.1"/></svg>
<div style="left:-873.5px;width:1000px;text-align:right;top:499.80px;height:17px;line-height:17px;font-size:12.3px;color:#fff;font-weight:400;white-space:pre;">20</div>
<div style="left:178px;top:500.80px;height:15px;line-height:15px;font-size:11px;color:#fff;font-weight:400;white-space:pre;">ABK 865548;ABK 8...</div>
<div style="left:288px;top:499.80px;height:17px;line-height:17px;font-size:12.3px;color:#f0141e;font-weight:400;white-space:pre;">10.10.25</div>
<div style="left:353px;top:499.80px;height:17px;line-height:17px;font-size:12.3px;color:#fff;font-weight:400;white-space:pre;">21.11.25</div>
<div style="left:418px;top:499.80px;height:17px;line-height:17px;font-size:12.3px;color:#fff;font-weight:400;white-space:pre;text-decoration:underline;">E.B.PKW.A-1168534-0...</div>
<div style="left:558px;top:499.80px;height:17px;line-height:17px;font-size:12.3px;color:#fff;font-weight:400;white-space:pre;">*Kühlung Sensoreinheit*</div>
<div style="left:78.5px;width:1000px;text-align:right;top:499.80px;height:17px;line-height:17px;font-size:12.3px;color:#fff;font-weight:400;white-space:pre;">330,00</div>
<div style="left:1084px;top:499.80px;height:17px;line-height:17px;font-size:12.3px;color:#fff;font-weight:400;white-space:pre;">Stk</div>
<div style="left:203.5px;width:1000px;text-align:right;top:499.80px;height:17px;line-height:17px;font-size:12.3px;color:#fff;font-weight:400;white-space:pre;">0,000</div>
<div style="left:278.5px;width:1000px;text-align:right;top:499.80px;height:17px;line-height:17px;font-size:12.3px;color:#fff;font-weight:400;white-space:pre;">-330,00</div>
<div style="left:1358px;top:500.80px;height:15px;line-height:15px;font-size:11px;color:#fff;font-weight:400;white-space:pre;">KT1001</div>
<div style="left:703.5px;width:1000px;text-align:right;top:499.80px;height:17px;line-height:17px;font-size:12.3px;color:#fff;font-weight:400;white-space:pre;">0,00</div>
<div style="left:793.5px;width:1000px;text-align:right;top:499.80px;height:17px;line-height:17px;font-size:12.3px;color:#fff;font-weight:400;white-space:pre;">0,00 €</div>
<div style="left:953.5px;width:1000px;text-align:right;top:499.80px;height:17px;line-height:17px;font-size:12.3px;color:#fff;font-weight:400;white-space:pre;">1,00</div>
<div style="left:2007px;top:501.80px;height:13px;line-height:13px;font-size:9px;color:#4a6fa8;font-weight:400;white-space:pre;">BE25-00183</div>
<div style="left:2147px;top:501.80px;height:13px;line-height:13px;font-size:9px;color:#4a6fa8;font-weight:400;white-space:pre;">ANFL25-00109</div>
<div style="left:146px;top:501px;width:13px;height:13px;background:#fff;border:1px solid #333;"></div>
<div style="left:901px;top:501px;width:13px;height:13px;background:#fff;border:1px solid #333;"></div>
<div style="left:958px;top:501px;width:13px;height:13px;background:#fff;border:1px solid #333;"></div>
<div style="left:1428px;top:501px;width:13px;height:13px;background:#fff;border:1px solid #333;"></div>
<div style="left:1973px;top:501px;width:13px;height:13px;background:#fff;border:1px solid #333;"></div>
<div style="left:1976px;top:504px;width:7px;height:7px;background:#222;"></div>
<svg style="position:absolute;left:1477px;top:500.0px;" width="16" height="14" viewBox="0 0 16 14"><path d="M0.5 0.5h11.5l3.5 3.5v9.5H0.5z" fill="#fcfcfc" stroke="#d6d2d8" stroke-width="1"/><path d="M12 0.5v3.5h3.5z" fill="#cfcfd4"/><text x="7.3" y="10.5" font-size="10.5" fill="#8a8a8a" font-style="italic" text-anchor="middle" font-family="Liberation Sans">a</text></svg>
<div style="left:57px;top:518px;width:16px;height:21px;background:#ffffff;"></div>
<div style="left:72px;top:518px;width:58px;height:21px;background:#0078d7;"></div>
<div style="left:130px;top:518px;width:46px;height:21px;background:#0078d7;"></div>
<div style="left:176px;top:518px;width:110px;height:21px;background:#0078d7;"></div>
<div style="left:286px;top:518px;width:65px;height:21px;background:#0078d7;"></div>
<div style="left:351px;top:518px;width:65px;height:21px;background:#0078d7;"></div>
<div style="left:416px;top:518px;width:140px;height:21px;background:#0078d7;"></div>
<div style="left:556px;top:518px;width:210px;height:21px;background:#0078d7;"></div>
<div style="left:766px;top:518px;width:122px;height:21px;background:#0078d7;"></div>
<div style="left:888px;top:518px;width:40px;height:21px;background:#0078d7;"></div>
<div style="left:928px;top:518px;width:74px;height:21px;background:#0078d7;"></div>
<div style="left:1002px;top:518px;width:80px;height:21px;background:#0078d7;"></div>
<div style="left:1082px;top:518px;width:50px;height:21px;background:#0078d7;"></div>
<div style="left:1132px;top:518px;width:75px;height:21px;background:#0078d7;"></div>
<div style="left:1207px;top:518px;width:75px;height:21px;background:#0078d7;"></div>
<div style="left:1282px;top:518px;width:74px;height:21px;background:#0078d7;"></div>
<div style="left:1356px;top:518px;width:56px;height:21px;background:#0078d7;"></div>
<div style="left:1412px;top:518px;width:46px;height:21px;background:#0078d7;"></div>
<div style="left:1458px;top:518px;width:55px;height:21px;background:#0078d7;"></div>
<div style="left:1513px;top:518px;width:120px;height:21px;background:#f6b7a5;"></div>
<div style="left:1633px;top:518px;width:74px;height:21px;background:#0078d7;"></div>
<div style="left:1707px;top:518px;width:90px;height:21px;background:#0078d7;"></div>
<div style="left:1797px;top:518px;width:100px;height:21px;background:#0078d7;"></div>
<div style="left:1897px;top:518px;width:60px;height:21px;background:#0078d7;"></div>
<div style="left:1957px;top:518px;width:46px;height:21px;background:#0078d7;"></div>
<div style="left:2003px;top:518px;width:80px;height:21px;background:#0078d7;"></div>
<div style="left:2083px;top:518px;width:60px;height:21px;background:#0078d7;"></div>
<div style="left:2143px;top:518px;width:80px;height:21px;background:#0078d7;"></div>
<div style="left:129px;top:518px;width:1px;height:21px;background:#d9d9d9;"></div>
<div style="left:175px;top:518px;width:1px;height:21px;background:#d9d9d9;"></div>
<div style="left:285px;top:518px;width:1px;height:21px;background:#d9d9d9;"></div>
<div style="left:350px;top:518px;width:1px;height:21px;background:#d9d9d9;"></div>
<div style="left:415px;top:518px;width:1px;height:21px;background:#d9d9d9;"></div>
<div style="left:555px;top:518px;width:1px;height:21px;background:#d9d9d9;"></div>
<div style="left:765px;top:518px;width:1px;height:21px;background:#d9d9d9;"></div>
<div style="left:887px;top:518px;width:1px;height:21px;background:#d9d9d9;"></div>
<div style="left:927px;top:518px;width:1px;height:21px;background:#d9d9d9;"></div>
<div style="left:1001px;top:518px;width:1px;height:21px;background:#d9d9d9;"></div>
<div style="left:1081px;top:518px;width:1px;height:21px;background:#d9d9d9;"></div>
<div style="left:1131px;top:518px;width:1px;height:21px;background:#d9d9d9;"></div>
<div style="left:1206px;top:518px;width:1px;height:21px;background:#d9d9d9;"></div>
<div style="left:1281px;top:518px;width:1px;height:21px;background:#d9d9d9;"></div>
<div style="left:1355px;top:518px;width:1px;height:21px;background:#d9d9d9;"></div>
<div style="left:1411px;top:518px;width:1px;height:21px;background:#d9d9d9;"></div>
<div style="left:1457px;top:518px;width:1px;height:21px;background:#d9d9d9;"></div>
<div style="left:1512px;top:518px;width:1px;height:21px;background:#d9d9d9;"></div>
<div style="left:1632px;top:518px;width:1px;height:21px;background:#d9d9d9;"></div>
<div style="left:1706px;top:518px;width:1px;height:21px;background:#d9d9d9;"></div>
<div style="left:1796px;top:518px;width:1px;height:21px;background:#d9d9d9;"></div>
<div style="left:1896px;top:518px;width:1px;height:21px;background:#d9d9d9;"></div>
<div style="left:1956px;top:518px;width:1px;height:21px;background:#d9d9d9;"></div>
<div style="left:2002px;top:518px;width:1px;height:21px;background:#d9d9d9;"></div>
<div style="left:2082px;top:518px;width:1px;height:21px;background:#d9d9d9;"></div>
<div style="left:2142px;top:518px;width:1px;height:21px;background:#d9d9d9;"></div>
<div style="left:2222px;top:518px;width:1px;height:21px;background:#d9d9d9;"></div>
<div style="left:57px;top:538px;width:2165px;height:1px;background:#d9d9d9;"></div>
<div style="left:42px;top:518px;width:15px;height:21px;background:#efefef;"></div>
<div style="left:60px;top:523px;width:11px;height:11px;background:linear-gradient(#fff,#e4e4e4);border:1px solid #9a9a9a;border-radius:1px;"></div>
<svg style="position:absolute;left:61px;top:524px;" width="9" height="9" viewBox="0 0 9 9"><path d="M4.5 1.5v6M1.5 4.5h6" stroke="#2a3d8f" stroke-width="1.1"/></svg>
<div style="left:-873.5px;width:1000px;text-align:right;top:520.80px;height:17px;line-height:17px;font-size:12.3px;color:#fff;font-weight:400;white-space:pre;">80</div>
<div style="left:178px;top:521.80px;height:15px;line-height:15px;font-size:11px;color:#fff;font-weight:400;white-space:pre;">ABK 865482;ABK 8...</div>
<div style="left:288px;top:520.80px;height:17px;line-height:17px;font-size:12.3px;color:#f0141e;font-weight:400;white-space:pre;">07.08.25</div>
<div style="left:353px;top:520.80px;height:17px;line-height:17px;font-size:12.3px;color:#fff;font-weight:400;white-space:pre;">26.11.25</div>
<div style="left:418px;top:520.80px;height:17px;line-height:17px;font-size:12.3px;color:#fff;font-weight:400;white-space:pre;text-decoration:underline;">D.W.13.1100004</div>
<div style="left:558px;top:520.80px;height:17px;line-height:17px;font-size:12.3px;color:#fff;font-weight:400;white-space:pre;">*Dichtung-Schutz13 mm*</div>
<div style="left:78.5px;width:1000px;text-align:right;top:520.80px;height:17px;line-height:17px;font-size:12.3px;color:#fff;font-weight:400;white-space:pre;">420,00</div>
<div style="left:1084px;top:520.80px;height:17px;line-height:17px;font-size:12.3px;color:#fff;font-weight:400;white-space:pre;">Stk</div>
<div style="left:203.5px;width:1000px;text-align:right;top:520.80px;height:17px;line-height:17px;font-size:12.3px;color:#fff;font-weight:400;white-space:pre;">0,000</div>
<div style="left:278.5px;width:1000px;text-align:right;top:520.80px;height:17px;line-height:17px;font-size:12.3px;color:#fff;font-weight:400;white-space:pre;">-680,00</div>
<div style="left:1358px;top:521.80px;height:15px;line-height:15px;font-size:11px;color:#fff;font-weight:400;white-space:pre;">KT1001</div>
<div style="left:703.5px;width:1000px;text-align:right;top:520.80px;height:17px;line-height:17px;font-size:12.3px;color:#fff;font-weight:400;white-space:pre;">0,00</div>
<div style="left:793.5px;width:1000px;text-align:right;top:520.80px;height:17px;line-height:17px;font-size:12.3px;color:#fff;font-weight:400;white-space:pre;">0,00 €</div>
<div style="left:953.5px;width:1000px;text-align:right;top:520.80px;height:17px;line-height:17px;font-size:12.3px;color:#fff;font-weight:400;white-space:pre;">1,00</div>
<div style="left:2147px;top:522.80px;height:13px;line-height:13px;font-size:9px;color:#4a6fa8;font-weight:400;white-space:pre;">ANFL25-00117</div>
<div style="left:146px;top:522px;width:13px;height:13px;background:#fff;border:1px solid #333;"></div>
<div style="left:901px;top:522px;width:13px;height:13px;background:#fff;border:1px solid #333;"></div>
<div style="left:958px;top:522px;width:13px;height:13px;background:#fff;border:1px solid #333;"></div>
<div style="left:1428px;top:522px;width:13px;height:13px;background:#fff;border:1px solid #333;"></div>
<div style="left:1973px;top:522px;width:13px;height:13px;background:#fff;border:1px solid #333;"></div>
<div style="left:1976px;top:525px;width:7px;height:7px;background:#222;"></div>
<svg style="position:absolute;left:1468px;top:521.0px;" width="16" height="14" viewBox="0 0 16 14"><path d="M0.5 0.5h11.5l3.5 3.5v9.5H0.5z" fill="#fcfcfc" stroke="#d6d2d8" stroke-width="1"/><path d="M12 0.5v3.5h3.5z" fill="#cfcfd4"/><text x="7.3" y="10.5" font-size="10.5" fill="#8a8a8a" font-style="italic" text-anchor="middle" font-family="Liberation Sans">a</text></svg>
<div style="left:537px;top:520px;width:16px;height:17px;background:#e6e6e6;border:1px solid #b8b8b8;"></div>
<div style="left:542px;top:527px;width:1px;height:1px;background:#222;"></div>
<div style="left:545px;top:527px;width:1px;height:1px;background:#222;"></div>
<div style="left:548px;top:527px;width:1px;height:1px;background:#222;"></div>
<div style="left:1113px;top:520px;width:16px;height:17px;background:#e6e6e6;border:1px solid #b8b8b8;"></div>
<div style="left:1118px;top:527px;width:1px;height:1px;background:#222;"></div>
<div style="left:1121px;top:527px;width:1px;height:1px;background:#222;"></div>
<div style="left:1124px;top:527px;width:1px;height:1px;background:#222;"></div>
<div style="left:1613px;top:520px;width:17px;height:17px;background:#e6e6e6;border:1px solid #b8b8b8;"></div>
<div style="left:1618px;top:527px;width:1px;height:1px;background:#222;"></div>
<div style="left:1621px;top:527px;width:1px;height:1px;background:#222;"></div>
<div style="left:1624px;top:527px;width:1px;height:1px;background:#222;"></div>
<div style="left:1492px;top:519px;width:19px;height:19px;background:#ddd;border:1px solid #999;"></div>
<svg style="position:absolute;left:1496px;top:525px;" width="11" height="7" viewBox="0 0 11 7"><path d="M1 1l4.5 4.5L10 1" fill="none" stroke="#444" stroke-width="1.2"/></svg>
<div style="left:72px;top:518px;width:2150px;height:20px;border:1px dotted #f0a040;"></div>
<div style="left:57px;top:539px;width:16px;height:21px;background:#efefef;"></div>
<div style="left:72px;top:539px;width:58px;height:21px;background:#0078d7;"></div>
<div style="left:130px;top:539px;width:46px;height:21px;background:#0078d7;"></div>
<div style="left:176px;top:539px;width:110px;height:21px;background:#0078d7;"></div>
<div style="left:286px;top:539px;width:65px;height:21px;background:#0078d7;"></div>
<div style="left:351px;top:539px;width:65px;height:21px;background:#0078d7;"></div>
<div style="left:416px;top:539px;width:140px;height:21px;background:#0078d7;"></div>
<div style="left:556px;top:539px;width:210px;height:21px;background:#0078d7;"></div>
<div style="left:766px;top:539px;width:122px;height:21px;background:#0078d7;"></div>
<div style="left:888px;top:539px;width:40px;height:21px;background:#f6b7a5;"></div>
<div style="left:928px;top:539px;width:74px;height:21px;background:#f6b7a5;"></div>
<div style="left:1002px;top:539px;width:80px;height:21px;background:#0078d7;"></div>
<div style="left:1082px;top:539px;width:50px;height:21px;background:#0078d7;"></div>
<div style="left:1132px;top:539px;width:75px;height:21px;background:#0078d7;"></div>
<div style="left:1207px;top:539px;width:75px;height:21px;background:#0078d7;"></div>
<div style="left:1282px;top:539px;width:74px;height:21px;background:#0078d7;"></div>
<div style="left:1356px;top:539px;width:56px;height:21px;background:#0078d7;"></div>
<div style="left:1412px;top:539px;width:46px;height:21px;background:#0078d7;"></div>
<div style="left:1458px;top:539px;width:55px;height:21px;background:#0078d7;"></div>
<div style="left:1513px;top:539px;width:120px;height:21px;background:#f6b7a5;"></div>
<div style="left:1633px;top:539px;width:74px;height:21px;background:#0078d7;"></div>
<div style="left:1707px;top:539px;width:90px;height:21px;background:#0078d7;"></div>
<div style="left:1797px;top:539px;width:100px;height:21px;background:#0078d7;"></div>
<div style="left:1897px;top:539px;width:60px;height:21px;background:#0078d7;"></div>
<div style="left:1957px;top:539px;width:46px;height:21px;background:#0078d7;"></div>
<div style="left:2003px;top:539px;width:80px;height:21px;background:#0078d7;"></div>
<div style="left:2083px;top:539px;width:60px;height:21px;background:#0078d7;"></div>
<div style="left:2143px;top:539px;width:80px;height:21px;background:#0078d7;"></div>
<div style="left:129px;top:539px;width:1px;height:21px;background:#d9d9d9;"></div>
<div style="left:175px;top:539px;width:1px;height:21px;background:#d9d9d9;"></div>
<div style="left:285px;top:539px;width:1px;height:21px;background:#d9d9d9;"></div>
<div style="left:350px;top:539px;width:1px;height:21px;background:#d9d9d9;"></div>
<div style="left:415px;top:539px;width:1px;height:21px;background:#d9d9d9;"></div>
<div style="left:555px;top:539px;width:1px;height:21px;background:#d9d9d9;"></div>
<div style="left:765px;top:539px;width:1px;height:21px;background:#d9d9d9;"></div>
<div style="left:887px;top:539px;width:1px;height:21px;background:#d9d9d9;"></div>
<div style="left:927px;top:539px;width:1px;height:21px;background:#d9d9d9;"></div>
<div style="left:1001px;top:539px;width:1px;height:21px;background:#d9d9d9;"></div>
<div style="left:1081px;top:539px;width:1px;height:21px;background:#d9d9d9;"></div>
<div style="left:1131px;top:539px;width:1px;height:21px;background:#d9d9d9;"></div>
<div style="left:1206px;top:539px;width:1px;height:21px;background:#d9d9d9;"></div>
<div style="left:1281px;top:539px;width:1px;height:21px;background:#d9d9d9;"></div>
<div style="left:1355px;top:539px;width:1px;height:21px;background:#d9d9d9;"></div>
<div style="left:1411px;top:539px;width:1px;height:21px;background:#d9d9d9;"></div>
<div style="left:1457px;top:539px;width:1px;height:21px;background:#d9d9d9;"></div>
<div style="left:1512px;top:539px;width:1px;height:21px;background:#d9d9d9;"></div>
<div style="left:1632px;top:539px;width:1px;height:21px;background:#d9d9d9;"></div>
<div style="left:1706px;top:539px;width:1px;height:21px;background:#d9d9d9;"></div>
<div style="left:1796px;top:539px;width:1px;height:21px;background:#d9d9d9;"></div>
<div style="left:1896px;top:539px;width:1px;height:21px;background:#d9d9d9;"></div>
<div style="left:1956px;top:539px;width:1px;height:21px;background:#d9d9d9;"></div>
<div style="left:2002px;top:539px;width:1px;height:21px;background:#d9d9d9;"></div>
<div style="left:2082px;top:539px;width:1px;height:21px;background:#d9d9d9;"></div>
<div style="left:2142px;top:539px;width:1px;height:21px;background:#d9d9d9;"></div>
<div style="left:2222px;top:539px;width:1px;height:21px;background:#d9d9d9;"></div>
<div style="left:57px;top:559px;width:2165px;height:1px;background:#d9d9d9;"></div>
<div style="left:42px;top:539px;width:15px;height:21px;background:#efefef;"></div>
<div style="left:60px;top:544px;width:11px;height:11px;background:linear-gradient(#fff,#e4e4e4);border:1px solid #9a9a9a;border-radius:1px;"></div>
<svg style="position:absolute;left:61px;top:545px;" width="9" height="9" viewBox="0 0 9 9"><path d="M4.5 1.5v6M1.5 4.5h6" stroke="#2a3d8f" stroke-width="1.1"/></svg>
<div style="left:-873.5px;width:1000px;text-align:right;top:541.80px;height:17px;line-height:17px;font-size:12.3px;color:#fff;font-weight:400;white-space:pre;">140</div>
<div style="left:178px;top:542.80px;height:15px;line-height:15px;font-size:11px;color:#fff;font-weight:400;white-space:pre;">ABK 865495;ABK 8...</div>
<div style="left:288px;top:541.80px;height:17px;line-height:17px;font-size:12.3px;color:#fff;font-weight:400;white-space:pre;">27.11.25</div>
<div style="left:353px;top:541.80px;height:17px;line-height:17px;font-size:12.3px;color:#fff;font-weight:400;white-space:pre;">28.11.25</div>
<div style="left:418px;top:541.80px;height:17px;line-height:17px;font-size:12.3px;color:#fff;font-weight:400;white-space:pre;text-decoration:underline;">1100017</div>
<div style="left:558px;top:541.80px;height:17px;line-height:17px;font-size:12.3px;color:#fff;font-weight:400;white-space:pre;">*Stahlblech*</div>
<div style="left:768px;top:542.80px;height:15px;line-height:15px;font-size:11px;color:#fff;font-weight:400;white-space:pre;">6000x80x10</div>
<div style="left:78.5px;width:1000px;text-align:right;top:541.80px;height:17px;line-height:17px;font-size:12.3px;color:#fff;font-weight:400;white-space:pre;">9.280,00</div>
<div style="left:1084px;top:541.80px;height:17px;line-height:17px;font-size:12.3px;color:#fff;font-weight:400;white-space:pre;">mm</div>
<div style="left:203.5px;width:1000px;text-align:right;top:541.80px;height:17px;line-height:17px;font-size:12.3px;color:#fff;font-weight:400;white-space:pre;">0,000</div>
<div style="left:278.5px;width:1000px;text-align:right;top:541.80px;height:17px;line-height:17px;font-size:12.3px;color:#fff;font-weight:400;white-space:pre;">-9.280,00</div>
<div style="left:1358px;top:542.80px;height:15px;line-height:15px;font-size:11px;color:#fff;font-weight:400;white-space:pre;">RM1001</div>
<div style="left:146px;top:543px;width:13px;height:13px;background:#fff;border:1px solid #333;"></div>
<div style="left:901px;top:543px;width:13px;height:13px;background:#fff;border:1px solid #333;"></div>
<svg style="position:absolute;left:902px;top:544px;" width="11" height="11" viewBox="0 0 11 11"><path d="M1.5 5.5l3 3 5-6.5" fill="none" stroke="#333" stroke-width="1.1"/></svg>
<div style="left:958px;top:543px;width:13px;height:13px;background:#fff;border:1px solid #333;"></div>
<svg style="position:absolute;left:959px;top:544px;" width="11" height="11" viewBox="0 0 11 11"><path d="M1.5 5.5l3 3 5-6.5" fill="none" stroke="#333" stroke-width="1.1"/></svg>
<div style="left:1428px;top:543px;width:13px;height:13px;background:#fff;border:1px solid #333;"></div>
<svg style="position:absolute;left:1429px;top:544px;" width="11" height="11" viewBox="0 0 11 11"><path d="M1.5 5.5l3 3 5-6.5" fill="none" stroke="#333" stroke-width="1.1"/></svg>
<svg style="position:absolute;left:1477px;top:542.0px;" width="16" height="14" viewBox="0 0 16 14"><path d="M0.5 0.5h11.5l3.5 3.5v9.5H0.5z" fill="#fcfcfc" stroke="#d6d2d8" stroke-width="1"/><path d="M12 0.5v3.5h3.5z" fill="#cfcfd4"/><text x="7.3" y="10.5" font-size="10.5" fill="#8a8a8a" font-style="italic" text-anchor="middle" font-family="Liberation Sans">a</text></svg>
<div style="left:57px;top:560px;width:16px;height:21px;background:#ffffff;"></div>
<div style="left:72px;top:560px;width:58px;height:21px;background:#ffffff;"></div>
<div style="left:130px;top:560px;width:46px;height:21px;background:#ffffff;"></div>
<div style="left:176px;top:560px;width:110px;height:21px;background:#fefee1;"></div>
<div style="left:286px;top:560px;width:65px;height:21px;background:#ffffff;"></div>
<div style="left:351px;top:560px;width:65px;height:21px;background:#ffffff;"></div>
<div style="left:416px;top:560px;width:140px;height:21px;background:#ffffff;"></div>
<div style="left:556px;top:560px;width:210px;height:21px;background:#ffffff;"></div>
<div style="left:766px;top:560px;width:122px;height:21px;background:#fefee1;"></div>
<div style="left:888px;top:560px;width:40px;height:21px;background:#fefee1;"></div>
<div style="left:928px;top:560px;width:74px;height:21px;background:#fefee1;"></div>
<div style="left:1002px;top:560px;width:80px;height:21px;background:#ffffff;"></div>
<div style="left:1082px;top:560px;width:50px;height:21px;background:#fefee1;"></div>
<div style="left:1132px;top:560px;width:75px;height:21px;background:#fefee1;"></div>
<div style="left:1207px;top:560px;width:75px;height:21px;background:#fefee1;"></div>
<div style="left:1282px;top:560px;width:74px;height:21px;background:#fefee1;"></div>
<div style="left:1356px;top:560px;width:56px;height:21px;background:#fefee1;"></div>
<div style="left:1412px;top:560px;width:46px;height:21px;background:#ffffff;"></div>
<div style="left:1458px;top:560px;width:55px;height:21px;background:#c3e59b;"></div>
<div style="left:1513px;top:560px;width:120px;height:21px;background:#ffffff;"></div>
<div style="left:1633px;top:560px;width:74px;height:21px;background:#fefee1;"></div>
<div style="left:1707px;top:560px;width:90px;height:21px;background:#ffffff;"></div>
<div style="left:1797px;top:560px;width:100px;height:21px;background:#ffffff;"></div>
<div style="left:1897px;top:560px;width:60px;height:21px;background:#ffffff;"></div>
<div style="left:1957px;top:560px;width:46px;height:21px;background:#ffffff;"></div>
<div style="left:2003px;top:560px;width:80px;height:21px;background:#ffffff;"></div>
<div style="left:2083px;top:560px;width:60px;height:21px;background:#ffffff;"></div>
<div style="left:2143px;top:560px;width:80px;height:21px;background:#ffffff;"></div>
<div style="left:129px;top:560px;width:1px;height:21px;background:#d9d9d9;"></div>
<div style="left:175px;top:560px;width:1px;height:21px;background:#d9d9d9;"></div>
<div style="left:285px;top:560px;width:1px;height:21px;background:#d9d9d9;"></div>
<div style="left:350px;top:560px;width:1px;height:21px;background:#d9d9d9;"></div>
<div style="left:415px;top:560px;width:1px;height:21px;background:#d9d9d9;"></div>
<div style="left:555px;top:560px;width:1px;height:21px;background:#d9d9d9;"></div>
<div style="left:765px;top:560px;width:1px;height:21px;background:#d9d9d9;"></div>
<div style="left:887px;top:560px;width:1px;height:21px;background:#d9d9d9;"></div>
<div style="left:927px;top:560px;width:1px;height:21px;background:#d9d9d9;"></div>
<div style="left:1001px;top:560px;width:1px;height:21px;background:#d9d9d9;"></div>
<div style="left:1081px;top:560px;width:1px;height:21px;background:#d9d9d9;"></div>
<div style="left:1131px;top:560px;width:1px;height:21px;background:#d9d9d9;"></div>
<div style="left:1206px;top:560px;width:1px;height:21px;background:#d9d9d9;"></div>
<div style="left:1281px;top:560px;width:1px;height:21px;background:#d9d9d9;"></div>
<div style="left:1355px;top:560px;width:1px;height:21px;background:#d9d9d9;"></div>
<div style="left:1411px;top:560px;width:1px;height:21px;background:#d9d9d9;"></div>
<div style="left:1457px;top:560px;width:1px;height:21px;background:#d9d9d9;"></div>
<div style="left:1512px;top:560px;width:1px;height:21px;background:#d9d9d9;"></div>
<div style="left:1632px;top:560px;width:1px;height:21px;background:#d9d9d9;"></div>
<div style="left:1706px;top:560px;width:1px;height:21px;background:#d9d9d9;"></div>
<div style="left:1796px;top:560px;width:1px;height:21px;background:#d9d9d9;"></div>
<div style="left:1896px;top:560px;width:1px;height:21px;background:#d9d9d9;"></div>
<div style="left:1956px;top:560px;width:1px;height:21px;background:#d9d9d9;"></div>
<div style="left:2002px;top:560px;width:1px;height:21px;background:#d9d9d9;"></div>
<div style="left:2082px;top:560px;width:1px;height:21px;background:#d9d9d9;"></div>
<div style="left:2142px;top:560px;width:1px;height:21px;background:#d9d9d9;"></div>
<div style="left:2222px;top:560px;width:1px;height:21px;background:#d9d9d9;"></div>
<div style="left:57px;top:580px;width:2165px;height:1px;background:#d9d9d9;"></div>
<div style="left:42px;top:560px;width:15px;height:21px;background:#efefef;"></div>
<div style="left:60px;top:565px;width:11px;height:11px;background:linear-gradient(#fff,#e4e4e4);border:1px solid #9a9a9a;border-radius:1px;"></div>
<svg style="position:absolute;left:61px;top:566px;" width="9" height="9" viewBox="0 0 9 9"><path d="M4.5 1.5v6M1.5 4.5h6" stroke="#2a3d8f" stroke-width="1.1"/></svg>
<div style="left:-873.5px;width:1000px;text-align:right;top:562.80px;height:17px;line-height:17px;font-size:12.3px;color:#111;font-weight:400;white-space:pre;">150</div>
<div style="left:178px;top:563.80px;height:15px;line-height:15px;font-size:11px;color:#111;font-weight:400;white-space:pre;">ABK 865552;ABK 8...</div>
<div style="left:288px;top:562.80px;height:17px;line-height:17px;font-size:12.3px;color:#f0141e;font-weight:400;white-space:pre;">24.10.25</div>
<div style="left:353px;top:562.80px;height:17px;line-height:17px;font-size:12.3px;color:#111;font-weight:400;white-space:pre;">05.12.25</div>
<div style="left:418px;top:562.80px;height:17px;line-height:17px;font-size:12.3px;color:#111;font-weight:400;white-space:pre;text-decoration:underline;">E.B.PKW.A-1168534-0...</div>
<div style="left:558px;top:562.80px;height:17px;line-height:17px;font-size:12.3px;color:#111;font-weight:400;white-space:pre;">*Platine Ansteuerung eine Sensorei...</div>
<div style="left:78.5px;width:1000px;text-align:right;top:562.80px;height:17px;line-height:17px;font-size:12.3px;color:#111;font-weight:400;white-space:pre;">243,00</div>
<div style="left:1084px;top:562.80px;height:17px;line-height:17px;font-size:12.3px;color:#111;font-weight:400;white-space:pre;">Stk</div>
<div style="left:203.5px;width:1000px;text-align:right;top:562.80px;height:17px;line-height:17px;font-size:12.3px;color:#111;font-weight:400;white-space:pre;">13,000</div>
<div style="left:278.5px;width:1000px;text-align:right;top:562.80px;height:17px;line-height:17px;font-size:12.3px;color:#111;font-weight:400;white-space:pre;">-243,00</div>
<div style="left:352.5px;width:1000px;text-align:right;top:562.80px;height:17px;line-height:17px;font-size:12.3px;color:#111;font-weight:400;white-space:pre;">20,00</div>
<div style="left:1358px;top:563.80px;height:15px;line-height:15px;font-size:11px;color:#111;font-weight:400;white-space:pre;">KT1001</div>
<div style="left:1515px;top:562.80px;height:17px;line-height:17px;font-size:12.3px;color:#111;font-weight:400;white-space:pre;text-decoration:underline;">ELEKTR</div>
<div style="left:146px;top:564px;width:13px;height:13px;background:#fff;border:1px solid #333;"></div>
<div style="left:901px;top:564px;width:13px;height:13px;background:#fff;border:1px solid #333;"></div>
<div style="left:958px;top:564px;width:13px;height:13px;background:#fff;border:1px solid #333;"></div>
<div style="left:1428px;top:564px;width:13px;height:13px;background:#fff;border:1px solid #333;"></div>
<svg style="position:absolute;left:1477px;top:563.0px;" width="16" height="14" viewBox="0 0 16 14"><path d="M0.5 0.5h11.5l3.5 3.5v9.5H0.5z" fill="#fcfcfc" stroke="#d6d2d8" stroke-width="1"/><path d="M12 0.5v3.5h3.5z" fill="#cfcfd4"/><text x="7.3" y="10.5" font-size="10.5" fill="#8a8a8a" font-style="italic" text-anchor="middle" font-family="Liberation Sans">a</text></svg>
<div style="left:57px;top:581px;width:16px;height:21px;background:#efefef;"></div>
<div style="left:72px;top:581px;width:58px;height:21px;background:#efefef;"></div>
<div style="left:130px;top:581px;width:46px;height:21px;background:#efefef;"></div>
<div style="left:176px;top:581px;width:110px;height:21px;background:#fefee1;"></div>
<div style="left:286px;top:581px;width:65px;height:21px;background:#efefef;"></div>
<div style="left:351px;top:581px;width:65px;height:21px;background:#efefef;"></div>
<div style="left:416px;top:581px;width:140px;height:21px;background:#efefef;"></div>
<div style="left:556px;top:581px;width:210px;height:21px;background:#efefef;"></div>
<div style="left:766px;top:581px;width:122px;height:21px;background:#fefee1;"></div>
<div style="left:888px;top:581px;width:40px;height:21px;background:#fefee1;"></div>
<div style="left:928px;top:581px;width:74px;height:21px;background:#fefee1;"></div>
<div style="left:1002px;top:581px;width:80px;height:21px;background:#efefef;"></div>
<div style="left:1082px;top:581px;width:50px;height:21px;background:#fefee1;"></div>
<div style="left:1132px;top:581px;width:75px;height:21px;background:#fefee1;"></div>
<div style="left:1207px;top:581px;width:75px;height:21px;background:#fefee1;"></div>
<div style="left:1282px;top:581px;width:74px;height:21px;background:#fefee1;"></div>
<div style="left:1356px;top:581px;width:56px;height:21px;background:#fefee1;"></div>
<div style="left:1412px;top:581px;width:46px;height:21px;background:#efefef;"></div>
<div style="left:1458px;top:581px;width:55px;height:21px;background:#c3e59b;"></div>
<div style="left:1513px;top:581px;width:120px;height:21px;background:#efefef;"></div>
<div style="left:1633px;top:581px;width:74px;height:21px;background:#fefee1;"></div>
<div style="left:1707px;top:581px;width:90px;height:21px;background:#efefef;"></div>
<div style="left:1797px;top:581px;width:100px;height:21px;background:#efefef;"></div>
<div style="left:1897px;top:581px;width:60px;height:21px;background:#efefef;"></div>
<div style="left:1957px;top:581px;width:46px;height:21px;background:#efefef;"></div>
<div style="left:2003px;top:581px;width:80px;height:21px;background:#efefef;"></div>
<div style="left:2083px;top:581px;width:60px;height:21px;background:#efefef;"></div>
<div style="left:2143px;top:581px;width:80px;height:21px;background:#efefef;"></div>
<div style="left:129px;top:581px;width:1px;height:21px;background:#d9d9d9;"></div>
<div style="left:175px;top:581px;width:1px;height:21px;background:#d9d9d9;"></div>
<div style="left:285px;top:581px;width:1px;height:21px;background:#d9d9d9;"></div>
<div style="left:350px;top:581px;width:1px;height:21px;background:#d9d9d9;"></div>
<div style="left:415px;top:581px;width:1px;height:21px;background:#d9d9d9;"></div>
<div style="left:555px;top:581px;width:1px;height:21px;background:#d9d9d9;"></div>
<div style="left:765px;top:581px;width:1px;height:21px;background:#d9d9d9;"></div>
<div style="left:887px;top:581px;width:1px;height:21px;background:#d9d9d9;"></div>
<div style="left:927px;top:581px;width:1px;height:21px;background:#d9d9d9;"></div>
<div style="left:1001px;top:581px;width:1px;height:21px;background:#d9d9d9;"></div>
<div style="left:1081px;top:581px;width:1px;height:21px;background:#d9d9d9;"></div>
<div style="left:1131px;top:581px;width:1px;height:21px;background:#d9d9d9;"></div>
<div style="left:1206px;top:581px;width:1px;height:21px;background:#d9d9d9;"></div>
<div style="left:1281px;top:581px;width:1px;height:21px;background:#d9d9d9;"></div>
<div style="left:1355px;top:581px;width:1px;height:21px;background:#d9d9d9;"></div>
<div style="left:1411px;top:581px;width:1px;height:21px;background:#d9d9d9;"></div>
<div style="left:1457px;top:581px;width:1px;height:21px;background:#d9d9d9;"></div>
<div style="left:1512px;top:581px;width:1px;height:21px;background:#d9d9d9;"></div>
<div style="left:1632px;top:581px;width:1px;height:21px;background:#d9d9d9;"></div>
<div style="left:1706px;top:581px;width:1px;height:21px;background:#d9d9d9;"></div>
<div style="left:1796px;top:581px;width:1px;height:21px;background:#d9d9d9;"></div>
<div style="left:1896px;top:581px;width:1px;height:21px;background:#d9d9d9;"></div>
<div style="left:1956px;top:581px;width:1px;height:21px;background:#d9d9d9;"></div>
<div style="left:2002px;top:581px;width:1px;height:21px;background:#d9d9d9;"></div>
<div style="left:2082px;top:581px;width:1px;height:21px;background:#d9d9d9;"></div>
<div style="left:2142px;top:581px;width:1px;height:21px;background:#d9d9d9;"></div>
<div style="left:2222px;top:581px;width:1px;height:21px;background:#d9d9d9;"></div>
<div style="left:57px;top:601px;width:2165px;height:1px;background:#d9d9d9;"></div>
<div style="left:42px;top:581px;width:15px;height:21px;background:#efefef;"></div>
<div style="left:60px;top:586px;width:11px;height:11px;background:linear-gradient(#fff,#e4e4e4);border:1px solid #9a9a9a;border-radius:1px;"></div>
<svg style="position:absolute;left:61px;top:587px;" width="9" height="9" viewBox="0 0 9 9"><path d="M4.5 1.5v6M1.5 4.5h6" stroke="#2a3d8f" stroke-width="1.1"/></svg>
<div style="left:-873.5px;width:1000px;text-align:right;top:583.80px;height:17px;line-height:17px;font-size:12.3px;color:#111;font-weight:400;white-space:pre;">30</div>
<div style="left:178px;top:584.80px;height:15px;line-height:15px;font-size:11px;color:#111;font-weight:400;white-space:pre;">AUFTG E AG25-00...</div>
<div style="left:288px;top:583.80px;height:17px;line-height:17px;font-size:12.3px;color:#f0141e;font-weight:400;white-space:pre;">25.11.25</div>
<div style="left:353px;top:583.80px;height:17px;line-height:17px;font-size:12.3px;color:#111;font-weight:400;white-space:pre;">26.11.25</div>
<div style="left:418px;top:583.80px;height:17px;line-height:17px;font-size:12.3px;color:#111;font-weight:400;white-space:pre;text-decoration:underline;">000051.1</div>
<div style="left:558px;top:583.80px;height:17px;line-height:17px;font-size:12.3px;color:#111;font-weight:400;white-space:pre;">*SCHEIBE A2.2 DIN 125 GAL:ZN*</div>
<div style="left:78.5px;width:1000px;text-align:right;top:583.80px;height:17px;line-height:17px;font-size:12.3px;color:#111;font-weight:400;white-space:pre;">10,00</div>
<div style="left:1084px;top:583.80px;height:17px;line-height:17px;font-size:12.3px;color:#111;font-weight:400;white-space:pre;">Stk</div>
<div style="left:203.5px;width:1000px;text-align:right;top:583.80px;height:17px;line-height:17px;font-size:12.3px;color:#111;font-weight:400;white-space:pre;">0,000</div>
<div style="left:278.5px;width:1000px;text-align:right;top:583.80px;height:17px;line-height:17px;font-size:12.3px;color:#111;font-weight:400;white-space:pre;">-2,00</div>
<div style="left:1358px;top:584.80px;height:15px;line-height:15px;font-size:11px;color:#111;font-weight:400;white-space:pre;">KT1001</div>
<div style="left:1515px;top:583.80px;height:17px;line-height:17px;font-size:12.3px;color:#111;font-weight:400;white-space:pre;text-decoration:underline;">STA</div>
<div style="left:146px;top:585px;width:13px;height:13px;background:#fff;border:1px solid #333;"></div>
<div style="left:901px;top:585px;width:13px;height:13px;background:#fff;border:1px solid #333;"></div>
<div style="left:958px;top:585px;width:13px;height:13px;background:#fff;border:1px solid #333;"></div>
<div style="left:1428px;top:585px;width:13px;height:13px;background:#fff;border:1px solid #333;"></div>
<svg style="position:absolute;left:1477px;top:584.0px;" width="16" height="14" viewBox="0 0 16 14"><path d="M0.5 0.5h11.5l3.5 3.5v9.5H0.5z" fill="#fcfcfc" stroke="#d6d2d8" stroke-width="1"/><path d="M12 0.5v3.5h3.5z" fill="#cfcfd4"/><text x="7.3" y="10.5" font-size="10.5" fill="#8a8a8a" font-style="italic" text-anchor="middle" font-family="Liberation Sans">a</text></svg>
<div style="left:57px;top:602px;width:16px;height:21px;background:#ffffff;"></div>
<div style="left:72px;top:602px;width:58px;height:21px;background:#ffffff;"></div>
<div style="left:130px;top:602px;width:46px;height:21px;background:#ffffff;"></div>
<div style="left:176px;top:602px;width:110px;height:21px;background:#fefee1;"></div>
<div style="left:286px;top:602px;width:65px;height:21px;background:#ffffff;"></div>
<div style="left:351px;top:602px;width:65px;height:21px;background:#ffffff;"></div>
<div style="left:416px;top:602px;width:140px;height:21px;background:#ffffff;"></div>
<div style="left:556px;top:602px;width:210px;height:21px;background:#ffffff;"></div>
<div style="left:766px;top:602px;width:122px;height:21px;background:#fefee1;"></div>
<div style="left:888px;top:602px;width:40px;height:21px;background:#fefee1;"></div>
<div style="left:928px;top:602px;width:74px;height:21px;background:#fefee1;"></div>
<div style="left:1002px;top:602px;width:80px;height:21px;background:#ffffff;"></div>
<div style="left:1082px;top:602px;width:50px;height:21px;background:#fefee1;"></div>
<div style="left:1132px;top:602px;width:75px;height:21px;background:#fefee1;"></div>
<div style="left:1207px;top:602px;width:75px;height:21px;background:#fefee1;"></div>
<div style="left:1282px;top:602px;width:74px;height:21px;background:#fefee1;"></div>
<div style="left:1356px;top:602px;width:56px;height:21px;background:#fefee1;"></div>
<div style="left:1412px;top:602px;width:46px;height:21px;background:#ffffff;"></div>
<div style="left:1458px;top:602px;width:55px;height:21px;background:#c3e59b;"></div>
<div style="left:1513px;top:602px;width:120px;height:21px;background:#ffffff;"></div>
<div style="left:1633px;top:602px;width:74px;height:21px;background:#fefee1;"></div>
<div style="left:1707px;top:602px;width:90px;height:21px;background:#ffffff;"></div>
<div style="left:1797px;top:602px;width:100px;height:21px;background:#ffffff;"></div>
<div style="left:1897px;top:602px;width:60px;height:21px;background:#ffffff;"></div>
<div style="left:1957px;top:602px;width:46px;height:21px;background:#ffffff;"></div>
<div style="left:2003px;top:602px;width:80px;height:21px;background:#ffffff;"></div>
<div style="left:2083px;top:602px;width:60px;height:21px;background:#ffffff;"></div>
<div style="left:2143px;top:602px;width:80px;height:21px;background:#ffffff;"></div>
<div style="left:129px;top:602px;width:1px;height:21px;background:#d9d9d9;"></div>
<div style="left:175px;top:602px;width:1px;height:21px;background:#d9d9d9;"></div>
<div style="left:285px;top:602px;width:1px;height:21px;background:#d9d9d9;"></div>
<div style="left:350px;top:602px;width:1px;height:21px;background:#d9d9d9;"></div>
<div style="left:415px;top:602px;width:1px;height:21px;background:#d9d9d9;"></div>
<div style="left:555px;top:602px;width:1px;height:21px;background:#d9d9d9;"></div>
<div style="left:765px;top:602px;width:1px;height:21px;background:#d9d9d9;"></div>
<div style="left:887px;top:602px;width:1px;height:21px;background:#d9d9d9;"></div>
<div style="left:927px;top:602px;width:1px;height:21px;background:#d9d9d9;"></div>
<div style="left:1001px;top:602px;width:1px;height:21px;background:#d9d9d9;"></div>
<div style="left:1081px;top:602px;width:1px;height:21px;background:#d9d9d9;"></div>
<div style="left:1131px;top:602px;width:1px;height:21px;background:#d9d9d9;"></div>
<div style="left:1206px;top:602px;width:1px;height:21px;background:#d9d9d9;"></div>
<div style="left:1281px;top:602px;width:1px;height:21px;background:#d9d9d9;"></div>
<div style="left:1355px;top:602px;width:1px;height:21px;background:#d9d9d9;"></div>
<div style="left:1411px;top:602px;width:1px;height:21px;background:#d9d9d9;"></div>
<div style="left:1457px;top:602px;width:1px;height:21px;background:#d9d9d9;"></div>
<div style="left:1512px;top:602px;width:1px;height:21px;background:#d9d9d9;"></div>
<div style="left:1632px;top:602px;width:1px;height:21px;background:#d9d9d9;"></div>
<div style="left:1706px;top:602px;width:1px;height:21px;background:#d9d9d9;"></div>
<div style="left:1796px;top:602px;width:1px;height:21px;background:#d9d9d9;"></div>
<div style="left:1896px;top:602px;width:1px;height:21px;background:#d9d9d9;"></div>
<div style="left:1956px;top:602px;width:1px;height:21px;background:#d9d9d9;"></div>
<div style="left:2002px;top:602px;width:1px;height:21px;background:#d9d9d9;"></div>
<div style="left:2082px;top:602px;width:1px;height:21px;background:#d9d9d9;"></div>
<div style="left:2142px;top:602px;width:1px;height:21px;background:#d9d9d9;"></div>
<div style="left:2222px;top:602px;width:1px;height:21px;background:#d9d9d9;"></div>
<div style="left:57px;top:622px;width:2165px;height:1px;background:#d9d9d9;"></div>
<div style="left:42px;top:602px;width:15px;height:21px;background:#efefef;"></div>
<div style="left:60px;top:607px;width:11px;height:11px;background:linear-gradient(#fff,#e4e4e4);border:1px solid #9a9a9a;border-radius:1px;"></div>
<svg style="position:absolute;left:61px;top:608px;" width="9" height="9" viewBox="0 0 9 9"><path d="M4.5 1.5v6M1.5 4.5h6" stroke="#2a3d8f" stroke-width="1.1"/></svg>
<div style="left:-873.5px;width:1000px;text-align:right;top:604.80px;height:17px;line-height:17px;font-size:12.3px;color:#111;font-weight:400;white-space:pre;">10</div>
<div style="left:178px;top:605.80px;height:15px;line-height:15px;font-size:11px;color:#111;font-weight:400;white-space:pre;">ABK 865577;ABK 8...</div>
<div style="left:288px;top:604.80px;height:17px;line-height:17px;font-size:12.3px;color:#f0141e;font-weight:400;white-space:pre;">20.11.25</div>
<div style="left:353px;top:604.80px;height:17px;line-height:17px;font-size:12.3px;color:#111;font-weight:400;white-space:pre;">21.11.25</div>
<div style="left:418px;top:604.80px;height:17px;line-height:17px;font-size:12.3px;color:#111;font-weight:400;white-space:pre;text-decoration:underline;">D.W.13.1100003</div>
<div style="left:558px;top:604.80px;height:17px;line-height:17px;font-size:12.3px;color:#111;font-weight:400;white-space:pre;">*Dichtung-Einsatz 13 mm*</div>
<div style="left:78.5px;width:1000px;text-align:right;top:604.80px;height:17px;line-height:17px;font-size:12.3px;color:#111;font-weight:400;white-space:pre;">400,00</div>
<div style="left:1084px;top:604.80px;height:17px;line-height:17px;font-size:12.3px;color:#111;font-weight:400;white-space:pre;">Stk</div>
<div style="left:203.5px;width:1000px;text-align:right;top:604.80px;height:17px;line-height:17px;font-size:12.3px;color:#111;font-weight:400;white-space:pre;">0,000</div>
<div style="left:278.5px;width:1000px;text-align:right;top:604.80px;height:17px;line-height:17px;font-size:12.3px;color:#111;font-weight:400;white-space:pre;">-660,00</div>
<div style="left:1358px;top:605.80px;height:15px;line-height:15px;font-size:11px;color:#111;font-weight:400;white-space:pre;">KT1001</div>
<div style="left:1515px;top:604.80px;height:17px;line-height:17px;font-size:12.3px;color:#111;font-weight:400;white-space:pre;text-decoration:underline;">STAHL</div>
<div style="left:146px;top:606px;width:13px;height:13px;background:#fff;border:1px solid #333;"></div>
<div style="left:901px;top:606px;width:13px;height:13px;background:#fff;border:1px solid #333;"></div>
<div style="left:958px;top:606px;width:13px;height:13px;background:#fff;border:1px solid #333;"></div>
<div style="left:1428px;top:606px;width:13px;height:13px;background:#fff;border:1px solid #333;"></div>
<svg style="position:absolute;left:1477px;top:605.0px;" width="16" height="14" viewBox="0 0 16 14"><path d="M0.5 0.5h11.5l3.5 3.5v9.5H0.5z" fill="#fcfcfc" stroke="#d6d2d8" stroke-width="1"/><path d="M12 0.5v3.5h3.5z" fill="#cfcfd4"/><text x="7.3" y="10.5" font-size="10.5" fill="#8a8a8a" font-style="italic" text-anchor="middle" font-family="Liberation Sans">a</text></svg>
<div style="left:57px;top:623px;width:16px;height:21px;background:#efefef;"></div>
<div style="left:72px;top:623px;width:58px;height:21px;background:#efefef;"></div>
<div style="left:130px;top:623px;width:46px;height:21px;background:#efefef;"></div>
<div style="left:176px;top:623px;width:110px;height:21px;background:#fefee1;"></div>
<div style="left:286px;top:623px;width:65px;height:21px;background:#efefef;"></div>
<div style="left:351px;top:623px;width:65px;height:21px;background:#efefef;"></div>
<div style="left:416px;top:623px;width:140px;height:21px;background:#efefef;"></div>
<div style="left:556px;top:623px;width:210px;height:21px;background:#efefef;"></div>
<div style="left:766px;top:623px;width:122px;height:21px;background:#fefee1;"></div>
<div style="left:888px;top:623px;width:40px;height:21px;background:#fefee1;"></div>
<div style="left:928px;top:623px;width:74px;height:21px;background:#fefee1;"></div>
<div style="left:1002px;top:623px;width:80px;height:21px;background:#efefef;"></div>
<div style="left:1082px;top:623px;width:50px;height:21px;background:#fefee1;"></div>
<div style="left:1132px;top:623px;width:75px;height:21px;background:#fefee1;"></div>
<div style="left:1207px;top:623px;width:75px;height:21px;background:#fefee1;"></div>
<div style="left:1282px;top:623px;width:74px;height:21px;background:#fefee1;"></div>
<div style="left:1356px;top:623px;width:56px;height:21px;background:#fefee1;"></div>
<div style="left:1412px;top:623px;width:46px;height:21px;background:#efefef;"></div>
<div style="left:1458px;top:623px;width:55px;height:21px;background:#c3e59b;"></div>
<div style="left:1513px;top:623px;width:120px;height:21px;background:#efefef;"></div>
<div style="left:1633px;top:623px;width:74px;height:21px;background:#fefee1;"></div>
<div style="left:1707px;top:623px;width:90px;height:21px;background:#efefef;"></div>
<div style="left:1797px;top:623px;width:100px;height:21px;background:#efefef;"></div>
<div style="left:1897px;top:623px;width:60px;height:21px;background:#efefef;"></div>
<div style="left:1957px;top:623px;width:46px;height:21px;background:#efefef;"></div>
<div style="left:2003px;top:623px;width:80px;height:21px;background:#efefef;"></div>
<div style="left:2083px;top:623px;width:60px;height:21px;background:#efefef;"></div>
<div style="left:2143px;top:623px;width:80px;height:21px;background:#efefef;"></div>
<div style="left:129px;top:623px;width:1px;height:21px;background:#d9d9d9;"></div>
<div style="left:175px;top:623px;width:1px;height:21px;background:#d9d9d9;"></div>
<div style="left:285px;top:623px;width:1px;height:21px;background:#d9d9d9;"></div>
<div style="left:350px;top:623px;width:1px;height:21px;background:#d9d9d9;"></div>
<div style="left:415px;top:623px;width:1px;height:21px;background:#d9d9d9;"></div>
<div style="left:555px;top:623px;width:1px;height:21px;background:#d9d9d9;"></div>
<div style="left:765px;top:623px;width:1px;height:21px;background:#d9d9d9;"></div>
<div style="left:887px;top:623px;width:1px;height:21px;background:#d9d9d9;"></div>
<div style="left:927px;top:623px;width:1px;height:21px;background:#d9d9d9;"></div>
<div style="left:1001px;top:623px;width:1px;height:21px;background:#d9d9d9;"></div>
<div style="left:1081px;top:623px;width:1px;height:21px;background:#d9d9d9;"></div>
<div style="left:1131px;top:623px;width:1px;height:21px;background:#d9d9d9;"></div>
<div style="left:1206px;top:623px;width:1px;height:21px;background:#d9d9d9;"></div>
<div style="left:1281px;top:623px;width:1px;height:21px;background:#d9d9d9;"></div>
<div style="left:1355px;top:623px;width:1px;height:21px;background:#d9d9d9;"></div>
<div style="left:1411px;top:623px;width:1px;height:21px;background:#d9d9d9;"></div>
<div style="left:1457px;top:623px;width:1px;height:21px;background:#d9d9d9;"></div>
<div style="left:1512px;top:623px;width:1px;height:21px;background:#d9d9d9;"></div>
<div style="left:1632px;top:623px;width:1px;height:21px;background:#d9d9d9;"></div>
<div style="left:1706px;top:623px;width:1px;height:21px;background:#d9d9d9;"></div>
<div style="left:1796px;top:623px;width:1px;height:21px;background:#d9d9d9;"></div>
<div style="left:1896px;top:623px;width:1px;height:21px;background:#d9d9d9;"></div>
<div style="left:1956px;top:623px;width:1px;height:21px;background:#d9d9d9;"></div>
<div style="left:2002px;top:623px;width:1px;height:21px;background:#d9d9d9;"></div>
<div style="left:2082px;top:623px;width:1px;height:21px;background:#d9d9d9;"></div>
<div style="left:2142px;top:623px;width:1px;height:21px;background:#d9d9d9;"></div>
<div style="left:2222px;top:623px;width:1px;height:21px;background:#d9d9d9;"></div>
<div style="left:57px;top:643px;width:2165px;height:1px;background:#d9d9d9;"></div>
<div style="left:42px;top:623px;width:15px;height:21px;background:#efefef;"></div>
<div style="left:60px;top:628px;width:11px;height:11px;background:linear-gradient(#fff,#e4e4e4);border:1px solid #9a9a9a;border-radius:1px;"></div>
<svg style="position:absolute;left:61px;top:629px;" width="9" height="9" viewBox="0 0 9 9"><path d="M4.5 1.5v6M1.5 4.5h6" stroke="#2a3d8f" stroke-width="1.1"/></svg>
<div style="left:-873.5px;width:1000px;text-align:right;top:625.80px;height:17px;line-height:17px;font-size:12.3px;color:#111;font-weight:400;white-space:pre;">70</div>
<div style="left:178px;top:626.80px;height:15px;line-height:15px;font-size:11px;color:#111;font-weight:400;white-space:pre;">ABK 865577;ABK 8...</div>
<div style="left:288px;top:625.80px;height:17px;line-height:17px;font-size:12.3px;color:#f0141e;font-weight:400;white-space:pre;">03.10.25</div>
<div style="left:353px;top:625.80px;height:17px;line-height:17px;font-size:12.3px;color:#111;font-weight:400;white-space:pre;">26.11.25</div>
<div style="left:418px;top:625.80px;height:17px;line-height:17px;font-size:12.3px;color:#111;font-weight:400;white-space:pre;text-decoration:underline;">D.W.13.1100002</div>
<div style="left:558px;top:625.80px;height:17px;line-height:17px;font-size:12.3px;color:#111;font-weight:400;white-space:pre;">*Dichtung 13 mm*</div>
<div style="left:78.5px;width:1000px;text-align:right;top:625.80px;height:17px;line-height:17px;font-size:12.3px;color:#111;font-weight:400;white-space:pre;">432,00</div>
<div style="left:1084px;top:625.80px;height:17px;line-height:17px;font-size:12.3px;color:#111;font-weight:400;white-space:pre;">Stk</div>
<div style="left:203.5px;width:1000px;text-align:right;top:625.80px;height:17px;line-height:17px;font-size:12.3px;color:#111;font-weight:400;white-space:pre;">0,000</div>
<div style="left:278.5px;width:1000px;text-align:right;top:625.80px;height:17px;line-height:17px;font-size:12.3px;color:#111;font-weight:400;white-space:pre;">-652,00</div>
<div style="left:1358px;top:626.80px;height:15px;line-height:15px;font-size:11px;color:#111;font-weight:400;white-space:pre;">KT1001</div>
<div style="left:1515px;top:625.80px;height:17px;line-height:17px;font-size:12.3px;color:#111;font-weight:400;white-space:pre;text-decoration:underline;">STAHL</div>
<div style="left:146px;top:627px;width:13px;height:13px;background:#fff;border:1px solid #333;"></div>
<div style="left:901px;top:627px;width:13px;height:13px;background:#fff;border:1px solid #333;"></div>
<div style="left:958px;top:627px;width:13px;height:13px;background:#fff;border:1px solid #333;"></div>
<div style="left:1428px;top:627px;width:13px;height:13px;background:#fff;border:1px solid #333;"></div>
<svg style="position:absolute;left:1477px;top:626.0px;" width="16" height="14" viewBox="0 0 16 14"><path d="M0.5 0.5h11.5l3.5 3.5v9.5H0.5z" fill="#fcfcfc" stroke="#d6d2d8" stroke-width="1"/><path d="M12 0.5v3.5h3.5z" fill="#cfcfd4"/><text x="7.3" y="10.5" font-size="10.5" fill="#8a8a8a" font-style="italic" text-anchor="middle" font-family="Liberation Sans">a</text></svg>
<div style="left:57px;top:644px;width:16px;height:21px;background:#ffffff;"></div>
<div style="left:72px;top:644px;width:58px;height:21px;background:#ffffff;"></div>
<div style="left:130px;top:644px;width:46px;height:21px;background:#ffffff;"></div>
<div style="left:176px;top:644px;width:110px;height:21px;background:#fefee1;"></div>
<div style="left:286px;top:644px;width:65px;height:21px;background:#ffffff;"></div>
<div style="left:351px;top:644px;width:65px;height:21px;background:#ffffff;"></div>
<div style="left:416px;top:644px;width:140px;height:21px;background:#ffffff;"></div>
<div style="left:556px;top:644px;width:210px;height:21px;background:#ffffff;"></div>
<div style="left:766px;top:644px;width:122px;height:21px;background:#fefee1;"></div>
<div style="left:888px;top:644px;width:40px;height:21px;background:#fefee1;"></div>
<div style="left:928px;top:644px;width:74px;height:21px;background:#fefee1;"></div>
<div style="left:1002px;top:644px;width:80px;height:21px;background:#ffffff;"></div>
<div style="left:1082px;top:644px;width:50px;height:21px;background:#fefee1;"></div>
<div style="left:1132px;top:644px;width:75px;height:21px;background:#fefee1;"></div>
<div style="left:1207px;top:644px;width:75px;height:21px;background:#fefee1;"></div>
<div style="left:1282px;top:644px;width:74px;height:21px;background:#fefee1;"></div>
<div style="left:1356px;top:644px;width:56px;height:21px;background:#fefee1;"></div>
<div style="left:1412px;top:644px;width:46px;height:21px;background:#ffffff;"></div>
<div style="left:1458px;top:644px;width:55px;height:21px;background:#c3e59b;"></div>
<div style="left:1513px;top:644px;width:120px;height:21px;background:#ffffff;"></div>
<div style="left:1633px;top:644px;width:74px;height:21px;background:#fefee1;"></div>
<div style="left:1707px;top:644px;width:90px;height:21px;background:#ffffff;"></div>
<div style="left:1797px;top:644px;width:100px;height:21px;background:#ffffff;"></div>
<div style="left:1897px;top:644px;width:60px;height:21px;background:#ffffff;"></div>
<div style="left:1957px;top:644px;width:46px;height:21px;background:#ffffff;"></div>
<div style="left:2003px;top:644px;width:80px;height:21px;background:#ffffff;"></div>
<div style="left:2083px;top:644px;width:60px;height:21px;background:#ffffff;"></div>
<div style="left:2143px;top:644px;width:80px;height:21px;background:#ffffff;"></div>
<div style="left:129px;top:644px;width:1px;height:21px;background:#d9d9d9;"></div>
<div style="left:175px;top:644px;width:1px;height:21px;background:#d9d9d9;"></div>
<div style="left:285px;top:644px;width:1px;height:21px;background:#d9d9d9;"></div>
<div style="left:350px;top:644px;width:1px;height:21px;background:#d9d9d9;"></div>
<div style="left:415px;top:644px;width:1px;height:21px;background:#d9d9d9;"></div>
<div style="left:555px;top:644px;width:1px;height:21px;background:#d9d9d9;"></div>
<div style="left:765px;top:644px;width:1px;height:21px;background:#d9d9d9;"></div>
<div style="left:887px;top:644px;width:1px;height:21px;background:#d9d9d9;"></div>
<div style="left:927px;top:644px;width:1px;height:21px;background:#d9d9d9;"></div>
<div style="left:1001px;top:644px;width:1px;height:21px;background:#d9d9d9;"></div>
<div style="left:1081px;top:644px;width:1px;height:21px;background:#d9d9d9;"></div>
<div style="left:1131px;top:644px;width:1px;height:21px;background:#d9d9d9;"></div>
<div style="left:1206px;top:644px;width:1px;height:21px;background:#d9d9d9;"></div>
<div style="left:1281px;top:644px;width:1px;height:21px;background:#d9d9d9;"></div>
<div style="left:1355px;top:644px;width:1px;height:21px;background:#d9d9d9;"></div>
<div style="left:1411px;top:644px;width:1px;height:21px;background:#d9d9d9;"></div>
<div style="left:1457px;top:644px;width:1px;height:21px;background:#d9d9d9;"></div>
<div style="left:1512px;top:644px;width:1px;height:21px;background:#d9d9d9;"></div>
<div style="left:1632px;top:644px;width:1px;height:21px;background:#d9d9d9;"></div>
<div style="left:1706px;top:644px;width:1px;height:21px;background:#d9d9d9;"></div>
<div style="left:1796px;top:644px;width:1px;height:21px;background:#d9d9d9;"></div>
<div style="left:1896px;top:644px;width:1px;height:21px;background:#d9d9d9;"></div>
<div style="left:1956px;top:644px;width:1px;height:21px;background:#d9d9d9;"></div>
<div style="left:2002px;top:644px;width:1px;height:21px;background:#d9d9d9;"></div>
<div style="left:2082px;top:644px;width:1px;height:21px;background:#d9d9d9;"></div>
<div style="left:2142px;top:644px;width:1px;height:21px;background:#d9d9d9;"></div>
<div style="left:2222px;top:644px;width:1px;height:21px;background:#d9d9d9;"></div>
<div style="left:57px;top:664px;width:2165px;height:1px;background:#d9d9d9;"></div>
<div style="left:42px;top:644px;width:15px;height:21px;background:#efefef;"></div>
<div style="left:60px;top:649px;width:11px;height:11px;background:linear-gradient(#fff,#e4e4e4);border:1px solid #9a9a9a;border-radius:1px;"></div>
<svg style="position:absolute;left:61px;top:650px;" width="9" height="9" viewBox="0 0 9 9"><path d="M4.5 1.5v6M1.5 4.5h6" stroke="#2a3d8f" stroke-width="1.1"/></svg>
<div style="left:-873.5px;width:1000px;text-align:right;top:646.80px;height:17px;line-height:17px;font-size:12.3px;color:#111;font-weight:400;white-space:pre;">130</div>
<div style="left:178px;top:647.80px;height:15px;line-height:15px;font-size:11px;color:#111;font-weight:400;white-space:pre;">ABK 865459;ABK 8...</div>
<div style="left:288px;top:646.80px;height:17px;line-height:17px;font-size:12.3px;color:#f0141e;font-weight:400;white-space:pre;">31.10.25</div>
<div style="left:353px;top:646.80px;height:17px;line-height:17px;font-size:12.3px;color:#111;font-weight:400;white-space:pre;">28.11.25</div>
<div style="left:418px;top:646.80px;height:17px;line-height:17px;font-size:12.3px;color:#111;font-weight:400;white-space:pre;text-decoration:underline;">1.2210 Ø14X1000</div>
<div style="left:558px;top:646.80px;height:17px;line-height:17px;font-size:12.3px;color:#111;font-weight:400;white-space:pre;">*Silberstahl Rundstange / Welle DI...</div>
<div style="left:768px;top:647.80px;height:15px;line-height:15px;font-size:11px;color:#111;font-weight:400;white-space:pre;">Ø 14x1000</div>
<div style="left:78.5px;width:1000px;text-align:right;top:646.80px;height:17px;line-height:17px;font-size:12.3px;color:#111;font-weight:400;white-space:pre;">1.584,00</div>
<div style="left:1084px;top:646.80px;height:17px;line-height:17px;font-size:12.3px;color:#111;font-weight:400;white-space:pre;">m</div>
<div style="left:203.5px;width:1000px;text-align:right;top:646.80px;height:17px;line-height:17px;font-size:12.3px;color:#111;font-weight:400;white-space:pre;">344,000</div>
<div style="left:278.5px;width:1000px;text-align:right;top:646.80px;height:17px;line-height:17px;font-size:12.3px;color:#111;font-weight:400;white-space:pre;">-2.835,89</div>
<div style="left:1358px;top:647.80px;height:15px;line-height:15px;font-size:11px;color:#111;font-weight:400;white-space:pre;">RM1001</div>
<div style="left:1515px;top:646.80px;height:17px;line-height:17px;font-size:12.3px;color:#111;font-weight:400;white-space:pre;text-decoration:underline;">STAHL</div>
<div style="left:146px;top:648px;width:13px;height:13px;background:#fff;border:1px solid #333;"></div>
<div style="left:901px;top:648px;width:13px;height:13px;background:#fff;border:1px solid #333;"></div>
<div style="left:958px;top:648px;width:13px;height:13px;background:#fff;border:1px solid #333;"></div>
<div style="left:1428px;top:648px;width:13px;height:13px;background:#fff;border:1px solid #333;"></div>
<svg style="position:absolute;left:1429px;top:649px;" width="11" height="11" viewBox="0 0 11 11"><path d="M1.5 5.5l3 3 5-6.5" fill="none" stroke="#333" stroke-width="1.1"/></svg>
<svg style="position:absolute;left:1477px;top:647.0px;" width="16" height="14" viewBox="0 0 16 14"><path d="M0.5 0.5h11.5l3.5 3.5v9.5H0.5z" fill="#fcfcfc" stroke="#d6d2d8" stroke-width="1"/><path d="M12 0.5v3.5h3.5z" fill="#cfcfd4"/><text x="7.3" y="10.5" font-size="10.5" fill="#8a8a8a" font-style="italic" text-anchor="middle" font-family="Liberation Sans">a</text></svg>
<div style="left:57px;top:665px;width:16px;height:21px;background:#efefef;"></div>
<div style="left:72px;top:665px;width:58px;height:21px;background:#efefef;"></div>
<div style="left:130px;top:665px;width:46px;height:21px;background:#efefef;"></div>
<div style="left:176px;top:665px;width:110px;height:21px;background:#fefee1;"></div>
<div style="left:286px;top:665px;width:65px;height:21px;background:#efefef;"></div>
<div style="left:351px;top:665px;width:65px;height:21px;background:#efefef;"></div>
<div style="left:416px;top:665px;width:140px;height:21px;background:#efefef;"></div>
<div style="left:556px;top:665px;width:210px;height:21px;background:#efefef;"></div>
<div style="left:766px;top:665px;width:122px;height:21px;background:#fefee1;"></div>
<div style="left:888px;top:665px;width:40px;height:21px;background:#fefee1;"></div>
<div style="left:928px;top:665px;width:74px;height:21px;background:#fefee1;"></div>
<div style="left:1002px;top:665px;width:80px;height:21px;background:#efefef;"></div>
<div style="left:1082px;top:665px;width:50px;height:21px;background:#fefee1;"></div>
<div style="left:1132px;top:665px;width:75px;height:21px;background:#fefee1;"></div>
<div style="left:1207px;top:665px;width:75px;height:21px;background:#fefee1;"></div>
<div style="left:1282px;top:665px;width:74px;height:21px;background:#fefee1;"></div>
<div style="left:1356px;top:665px;width:56px;height:21px;background:#fefee1;"></div>
<div style="left:1412px;top:665px;width:46px;height:21px;background:#efefef;"></div>
<div style="left:1458px;top:665px;width:55px;height:21px;background:#c3e59b;"></div>
<div style="left:1513px;top:665px;width:120px;height:21px;background:#efefef;"></div>
<div style="left:1633px;top:665px;width:74px;height:21px;background:#fefee1;"></div>
<div style="left:1707px;top:665px;width:90px;height:21px;background:#efefef;"></div>
<div style="left:1797px;top:665px;width:100px;height:21px;background:#efefef;"></div>
<div style="left:1897px;top:665px;width:60px;height:21px;background:#efefef;"></div>
<div style="left:1957px;top:665px;width:46px;height:21px;background:#efefef;"></div>
<div style="left:2003px;top:665px;width:80px;height:21px;background:#efefef;"></div>
<div style="left:2083px;top:665px;width:60px;height:21px;background:#efefef;"></div>
<div style="left:2143px;top:665px;width:80px;height:21px;background:#efefef;"></div>
<div style="left:129px;top:665px;width:1px;height:21px;background:#d9d9d9;"></div>
<div style="left:175px;top:665px;width:1px;height:21px;background:#d9d9d9;"></div>
<div style="left:285px;top:665px;width:1px;height:21px;background:#d9d9d9;"></div>
<div style="left:350px;top:665px;width:1px;height:21px;background:#d9d9d9;"></div>
<div style="left:415px;top:665px;width:1px;height:21px;background:#d9d9d9;"></div>
<div style="left:555px;top:665px;width:1px;height:21px;background:#d9d9d9;"></div>
<div style="left:765px;top:665px;width:1px;height:21px;background:#d9d9d9;"></div>
<div style="left:887px;top:665px;width:1px;height:21px;background:#d9d9d9;"></div>
<div style="left:927px;top:665px;width:1px;height:21px;background:#d9d9d9;"></div>
<div style="left:1001px;top:665px;width:1px;height:21px;background:#d9d9d9;"></div>
<div style="left:1081px;top:665px;width:1px;height:21px;background:#d9d9d9;"></div>
<div style="left:1131px;top:665px;width:1px;height:21px;background:#d9d9d9;"></div>
<div style="left:1206px;top:665px;width:1px;height:21px;background:#d9d9d9;"></div>
<div style="left:1281px;top:665px;width:1px;height:21px;background:#d9d9d9;"></div>
<div style="left:1355px;top:665px;width:1px;height:21px;background:#d9d9d9;"></div>
<div style="left:1411px;top:665px;width:1px;height:21px;background:#d9d9d9;"></div>
<div style="left:1457px;top:665px;width:1px;height:21px;background:#d9d9d9;"></div>
<div style="left:1512px;top:665px;width:1px;height:21px;background:#d9d9d9;"></div>
<div style="left:1632px;top:665px;width:1px;height:21px;background:#d9d9d9;"></div>
<div style="left:1706px;top:665px;width:1px;height:21px;background:#d9d9d9;"></div>
<div style="left:1796px;top:665px;width:1px;height:21px;background:#d9d9d9;"></div>
<div style="left:1896px;top:665px;width:1px;height:21px;background:#d9d9d9;"></div>
<div style="left:1956px;top:665px;width:1px;height:21px;background:#d9d9d9;"></div>
<div style="left:2002px;top:665px;width:1px;height:21px;background:#d9d9d9;"></div>
<div style="left:2082px;top:665px;width:1px;height:21px;background:#d9d9d9;"></div>
<div style="left:2142px;top:665px;width:1px;height:21px;background:#d9d9d9;"></div>
<div style="left:2222px;top:665px;width:1px;height:21px;background:#d9d9d9;"></div>
<div style="left:57px;top:685px;width:2165px;height:1px;background:#d9d9d9;"></div>
<div style="left:42px;top:665px;width:15px;height:21px;background:#efefef;"></div>
<div style="left:60px;top:670px;width:11px;height:11px;background:linear-gradient(#fff,#e4e4e4);border:1px solid #9a9a9a;border-radius:1px;"></div>
<svg style="position:absolute;left:61px;top:671px;" width="9" height="9" viewBox="0 0 9 9"><path d="M4.5 1.5v6M1.5 4.5h6" stroke="#2a3d8f" stroke-width="1.1"/></svg>
<div style="left:-873.5px;width:1000px;text-align:right;top:667.80px;height:17px;line-height:17px;font-size:12.3px;color:#111;font-weight:400;white-space:pre;">160</div>
<div style="left:178px;top:668.80px;height:15px;line-height:15px;font-size:11px;color:#111;font-weight:400;white-space:pre;">ABK 865589</div>
<div style="left:288px;top:667.80px;height:17px;line-height:17px;font-size:12.3px;color:#f0141e;font-weight:400;white-space:pre;">21.11.25</div>
<div style="left:353px;top:667.80px;height:17px;line-height:17px;font-size:12.3px;color:#111;font-weight:400;white-space:pre;">05.12.25</div>
<div style="left:418px;top:667.80px;height:17px;line-height:17px;font-size:12.3px;color:#111;font-weight:400;white-space:pre;text-decoration:underline;">Z-21435000-L-Z64</div>
<div style="left:558px;top:667.80px;height:17px;line-height:17px;font-size:12.3px;color:#111;font-weight:400;white-space:pre;">*Zahnrad*</div>
<div style="left:768px;top:668.80px;height:15px;line-height:15px;font-size:11px;color:#111;font-weight:400;white-space:pre;">Ø53 mm, 64 Zähne, 2...</div>
<div style="left:78.5px;width:1000px;text-align:right;top:667.80px;height:17px;line-height:17px;font-size:12.3px;color:#111;font-weight:400;white-space:pre;">396,00</div>
<div style="left:1084px;top:667.80px;height:17px;line-height:17px;font-size:12.3px;color:#111;font-weight:400;white-space:pre;">Stk</div>
<div style="left:203.5px;width:1000px;text-align:right;top:667.80px;height:17px;line-height:17px;font-size:12.3px;color:#111;font-weight:400;white-space:pre;">50,000</div>
<div style="left:278.5px;width:1000px;text-align:right;top:667.80px;height:17px;line-height:17px;font-size:12.3px;color:#111;font-weight:400;white-space:pre;">-1.140,00</div>
<div style="left:1358px;top:668.80px;height:15px;line-height:15px;font-size:11px;color:#111;font-weight:400;white-space:pre;">KT1001</div>
<div style="left:1515px;top:667.80px;height:17px;line-height:17px;font-size:12.3px;color:#111;font-weight:400;white-space:pre;text-decoration:underline;">STAHL</div>
<div style="left:146px;top:669px;width:13px;height:13px;background:#fff;border:1px solid #333;"></div>
<div style="left:901px;top:669px;width:13px;height:13px;background:#fff;border:1px solid #333;"></div>
<div style="left:958px;top:669px;width:13px;height:13px;background:#fff;border:1px solid #333;"></div>
<div style="left:1428px;top:669px;width:13px;height:13px;background:#fff;border:1px solid #333;"></div>
<svg style="position:absolute;left:1477px;top:668.0px;" width="16" height="14" viewBox="0 0 16 14"><path d="M0.5 0.5h11.5l3.5 3.5v9.5H0.5z" fill="#fcfcfc" stroke="#d6d2d8" stroke-width="1"/><path d="M12 0.5v3.5h3.5z" fill="#cfcfd4"/><text x="7.3" y="10.5" font-size="10.5" fill="#8a8a8a" font-style="italic" text-anchor="middle" font-family="Liberation Sans">a</text></svg>
<div style="left:42px;top:686px;width:2180px;height:19px;background:#efefef;"></div>
<div style="left:42px;top:686px;width:2180px;height:1px;background:#d9d9d9;"></div>
<div style="left:44px;top:687.80px;height:17px;line-height:17px;font-size:12.3px;color:#111;font-weight:400;white-space:pre;">Typ : 56:Anfragen (BANF)</div>
<div style="left:57px;top:705px;width:16px;height:21px;background:#efefef;"></div>
<div style="left:72px;top:705px;width:58px;height:21px;background:#efefef;"></div>
<div style="left:130px;top:705px;width:46px;height:21px;background:#efefef;"></div>
<div style="left:176px;top:705px;width:110px;height:21px;background:#ffff80;"></div>
<div style="left:286px;top:705px;width:65px;height:21px;background:#efefef;"></div>
<div style="left:351px;top:705px;width:65px;height:21px;background:#efefef;"></div>
<div style="left:416px;top:705px;width:140px;height:21px;background:#efefef;"></div>
<div style="left:556px;top:705px;width:210px;height:21px;background:#efefef;"></div>
<div style="left:766px;top:705px;width:122px;height:21px;background:#fefee1;"></div>
<div style="left:888px;top:705px;width:40px;height:21px;background:#fefee1;"></div>
<div style="left:928px;top:705px;width:74px;height:21px;background:#fefee1;"></div>
<div style="left:1002px;top:705px;width:80px;height:21px;background:#efefef;"></div>
<div style="left:1082px;top:705px;width:50px;height:21px;background:#fefee1;"></div>
<div style="left:1132px;top:705px;width:75px;height:21px;background:#fefee1;"></div>
<div style="left:1207px;top:705px;width:75px;height:21px;background:#fefee1;"></div>
<div style="left:1282px;top:705px;width:74px;height:21px;background:#fefee1;"></div>
<div style="left:1356px;top:705px;width:56px;height:21px;background:#fefee1;"></div>
<div style="left:1412px;top:705px;width:46px;height:21px;background:#efefef;"></div>
<div style="left:1458px;top:705px;width:55px;height:21px;background:#c3e59b;"></div>
<div style="left:1513px;top:705px;width:120px;height:21px;background:#efefef;"></div>
<div style="left:1633px;top:705px;width:74px;height:21px;background:#fefee1;"></div>
<div style="left:1707px;top:705px;width:90px;height:21px;background:#efefef;"></div>
<div style="left:1797px;top:705px;width:100px;height:21px;background:#efefef;"></div>
<div style="left:1897px;top:705px;width:60px;height:21px;background:#efefef;"></div>
<div style="left:1957px;top:705px;width:46px;height:21px;background:#efefef;"></div>
<div style="left:2003px;top:705px;width:80px;height:21px;background:#efefef;"></div>
<div style="left:2083px;top:705px;width:60px;height:21px;background:#efefef;"></div>
<div style="left:2143px;top:705px;width:80px;height:21px;background:#efefef;"></div>
<div style="left:129px;top:705px;width:1px;height:21px;background:#d9d9d9;"></div>
<div style="left:175px;top:705px;width:1px;height:21px;background:#d9d9d9;"></div>
<div style="left:285px;top:705px;width:1px;height:21px;background:#d9d9d9;"></div>
<div style="left:350px;top:705px;width:1px;height:21px;background:#d9d9d9;"></div>
<div style="left:415px;top:705px;width:1px;height:21px;background:#d9d9d9;"></div>
<div style="left:555px;top:705px;width:1px;height:21px;background:#d9d9d9;"></div>
<div style="left:765px;top:705px;width:1px;height:21px;background:#d9d9d9;"></div>
<div style="left:887px;top:705px;width:1px;height:21px;background:#d9d9d9;"></div>
<div style="left:927px;top:705px;width:1px;height:21px;background:#d9d9d9;"></div>
<div style="left:1001px;top:705px;width:1px;height:21px;background:#d9d9d9;"></div>
<div style="left:1081px;top:705px;width:1px;height:21px;background:#d9d9d9;"></div>
<div style="left:1131px;top:705px;width:1px;height:21px;background:#d9d9d9;"></div>
<div style="left:1206px;top:705px;width:1px;height:21px;background:#d9d9d9;"></div>
<div style="left:1281px;top:705px;width:1px;height:21px;background:#d9d9d9;"></div>
<div style="left:1355px;top:705px;width:1px;height:21px;background:#d9d9d9;"></div>
<div style="left:1411px;top:705px;width:1px;height:21px;background:#d9d9d9;"></div>
<div style="left:1457px;top:705px;width:1px;height:21px;background:#d9d9d9;"></div>
<div style="left:1512px;top:705px;width:1px;height:21px;background:#d9d9d9;"></div>
<div style="left:1632px;top:705px;width:1px;height:21px;background:#d9d9d9;"></div>
<div style="left:1706px;top:705px;width:1px;height:21px;background:#d9d9d9;"></div>
<div style="left:1796px;top:705px;width:1px;height:21px;background:#d9d9d9;"></div>
<div style="left:1896px;top:705px;width:1px;height:21px;background:#d9d9d9;"></div>
<div style="left:1956px;top:705px;width:1px;height:21px;background:#d9d9d9;"></div>
<div style="left:2002px;top:705px;width:1px;height:21px;background:#d9d9d9;"></div>
<div style="left:2082px;top:705px;width:1px;height:21px;background:#d9d9d9;"></div>
<div style="left:2142px;top:705px;width:1px;height:21px;background:#d9d9d9;"></div>
<div style="left:2222px;top:705px;width:1px;height:21px;background:#d9d9d9;"></div>
<div style="left:57px;top:725px;width:2165px;height:1px;background:#d9d9d9;"></div>
<div style="left:42px;top:705px;width:15px;height:21px;background:#efefef;"></div>
<div style="left:60px;top:710px;width:11px;height:11px;background:linear-gradient(#fff,#e4e4e4);border:1px solid #9a9a9a;border-radius:1px;"></div>
<svg style="position:absolute;left:61px;top:711px;" width="9" height="9" viewBox="0 0 9 9"><path d="M4.5 1.5v6M1.5 4.5h6" stroke="#2a3d8f" stroke-width="1.1"/></svg>
<div style="left:-873.5px;width:1000px;text-align:right;top:707.80px;height:17px;line-height:17px;font-size:12.3px;color:#111;font-weight:400;white-space:pre;">170</div>
<div style="left:178px;top:708.80px;height:15px;line-height:15px;font-size:11px;color:#111;font-weight:400;white-space:pre;">BANF 2025-09-03.0...</div>
<div style="left:288px;top:707.80px;height:17px;line-height:17px;font-size:12.3px;color:#f0141e;font-weight:400;white-space:pre;">05.09.25</div>
<div style="left:353px;top:707.80px;height:17px;line-height:17px;font-size:12.3px;color:#111;font-weight:400;white-space:pre;">03.10.25</div>
<div style="left:418px;top:707.80px;height:17px;line-height:17px;font-size:12.3px;color:#111;font-weight:400;white-space:pre;text-decoration:underline;">1.2210 Ø14X1000</div>
<div style="left:558px;top:707.80px;height:17px;line-height:17px;font-size:12.3px;color:#111;font-weight:400;white-space:pre;">*Silberstahl Rundstange / Welle DI...</div>
<div style="left:768px;top:708.80px;height:15px;line-height:15px;font-size:11px;color:#111;font-weight:400;white-space:pre;">Ø 14x1000</div>
<div style="left:78.5px;width:1000px;text-align:right;top:707.80px;height:17px;line-height:17px;font-size:12.3px;color:#111;font-weight:400;white-space:pre;">81,00</div>
<div style="left:1084px;top:707.80px;height:17px;line-height:17px;font-size:12.3px;color:#111;font-weight:400;white-space:pre;">m</div>
<div style="left:203.5px;width:1000px;text-align:right;top:707.80px;height:17px;line-height:17px;font-size:12.3px;color:#111;font-weight:400;white-space:pre;">344,000</div>
<div style="left:278.5px;width:1000px;text-align:right;top:707.80px;height:17px;line-height:17px;font-size:12.3px;color:#111;font-weight:400;white-space:pre;">-2.835,89</div>
<div style="left:1358px;top:708.80px;height:15px;line-height:15px;font-size:11px;color:#111;font-weight:400;white-space:pre;">RM1001</div>
<div style="left:1515px;top:707.80px;height:17px;line-height:17px;font-size:12.3px;color:#111;font-weight:400;white-space:pre;text-decoration:underline;">STAHL</div>
<div style="left:146px;top:709px;width:13px;height:13px;background:#fff;border:1px solid #333;"></div>
<div style="left:901px;top:709px;width:13px;height:13px;background:#fff;border:1px solid #333;"></div>
<div style="left:958px;top:709px;width:13px;height:13px;background:#fff;border:1px solid #333;"></div>
<div style="left:1428px;top:709px;width:13px;height:13px;background:#fff;border:1px solid #333;"></div>
<svg style="position:absolute;left:1477px;top:708.0px;" width="16" height="14" viewBox="0 0 16 14"><path d="M0.5 0.5h11.5l3.5 3.5v9.5H0.5z" fill="#fcfcfc" stroke="#d6d2d8" stroke-width="1"/><path d="M12 0.5v3.5h3.5z" fill="#cfcfd4"/><text x="7.3" y="10.5" font-size="10.5" fill="#8a8a8a" font-style="italic" text-anchor="middle" font-family="Liberation Sans">a</text></svg>
<div style="left:34px;top:504px;width:3px;height:5px;background:#111;border-radius:50%;"></div>
<div style="left:34px;top:546px;width:3px;height:5px;background:#111;border-radius:50%;"></div>
<svg style="position:absolute;left:33px;top:523px;" width="8" height="11" viewBox="0 0 8 11"><path d="M1 1l5 4.5L1 10" fill="none" stroke="#111" stroke-width="1.3"/><circle cx="1.5" cy="5.5" r="1.2" fill="#111"/></svg>
<div style="left:1664px;top:533px;width:571px;height:388px;background:#f9f9f9;border:1px solid #8c8c8c;box-shadow:2px 2px 3px rgba(0,0,0,0.18);"></div>
<div style="left:1665px;top:534px;width:29px;height:386px;background:#efefef;"></div>
<div style="left:1694px;top:534px;width:1px;height:386px;background:#e2e2e2;"></div>
<div style="left:1697px;top:605px;width:535px;height:1px;background:#c5c5c5;"></div>
<div style="left:1697px;top:655px;width:535px;height:1px;background:#c5c5c5;"></div>
<div style="left:1697px;top:705px;width:535px;height:1px;background:#c5c5c5;"></div>
<div style="left:1697px;top:755px;width:535px;height:1px;background:#c5c5c5;"></div>
<div style="left:1697px;top:805px;width:535px;height:1px;background:#c5c5c5;"></div>
<div style="left:1669px;top:709px;width:563px;height:20px;background:linear-gradient(#fff9dc 0%,#ffeeb0 35%,#ffdc60 60%,#ffe690 100%);border:1px solid #e2c26a;border-radius:2px;"></div>
<div style="left:1698px;top:539.30px;height:17px;line-height:17px;font-size:12px;color:#262626;font-weight:400;white-space:pre;">Status: Bedarfstermin unmöglich =&gt; Produktion Termin verschieben (zuständig: AVOR)</div>
<div style="left:1698px;top:561.30px;height:17px;line-height:17px;font-size:12px;color:#262626;font-weight:400;white-space:pre;">Status: Artikel nicht zu beschaffen =&gt; in ABK austauschen mit Alternativartikel (zuständig: AVOR)</div>
<div style="left:1698px;top:583.30px;height:17px;line-height:17px;font-size:12px;color:#262626;font-weight:400;white-space:pre;">Status: entfernen</div>
<div style="left:1698px;top:611.30px;height:17px;line-height:17px;font-size:12px;color:#262626;font-weight:400;white-space:pre;">Automatischer Preisvorschlag</div>
<div style="left:1698px;top:633.30px;height:17px;line-height:17px;font-size:12px;color:#262626;font-weight:400;white-space:pre;">Preisübersicht</div>
<div style="left:1698px;top:661.30px;height:17px;line-height:17px;font-size:12px;color:#9a9a9a;font-weight:400;white-space:pre;">Bestellung auslösen [Lieferant angeben!]</div>
<div style="left:1698px;top:683.30px;height:17px;line-height:17px;font-size:12px;color:#262626;font-weight:400;white-space:pre;">Position anhängen</div>
<div style="left:1698px;top:711.30px;height:17px;line-height:17px;font-size:12px;color:#262626;font-weight:400;white-space:pre;">Neue Anfrage erstellen</div>
<div style="left:1698px;top:733.30px;height:17px;line-height:17px;font-size:12px;color:#262626;font-weight:400;white-space:pre;">An Anfrage anhängen</div>
<div style="left:1698px;top:761.30px;height:17px;line-height:17px;font-size:12px;color:#262626;font-weight:400;white-space:pre;">Lieferant entfernen</div>
<div style="left:1698px;top:783.30px;height:17px;line-height:17px;font-size:12px;color:#262626;font-weight:400;white-space:pre;">Markierte Zellen mit dem fokusierten Wert auffüllen</div>
<div style="left:1698px;top:811.30px;height:17px;line-height:17px;font-size:12px;color:#262626;font-weight:400;white-space:pre;">Anfrage-Nr.  (ANFL25-00117)</div>
<div style="left:1698px;top:833.30px;height:17px;line-height:17px;font-size:12px;color:#262626;font-weight:400;white-space:pre;">Artikelverwaltung  (D.W.13.1100004)</div>
<div style="left:1698px;top:855.30px;height:17px;line-height:17px;font-size:12px;color:#262626;font-weight:400;white-space:pre;">Bestellvorschläge  (2500078)</div>
<div style="left:1698px;top:877.30px;height:17px;line-height:17px;font-size:12px;color:#262626;font-weight:400;white-space:pre;">Einkauf [neu anlegen / unvollständige Parameter]</div>
<div style="left:1698px;top:899.30px;height:17px;line-height:17px;font-size:12px;color:#262626;font-weight:400;white-space:pre;">Unbenutzt</div>
<svg style="position:absolute;left:1673px;top:539px;" width="16" height="16" viewBox="0 0 16 16"><defs><radialGradient id="wg" cx="40%" cy="30%" r="70%"><stop offset="0" stop-color="#ffb04a"/><stop offset="1" stop-color="#d85a00"/></radialGradient></defs><path d="M8 1C5 1 2 9 1.5 12.5 1.3 14.5 3 15 8 15s6.7-.5 6.5-2.5C14 9 11 1 8 1z" fill="url(#wg)" stroke="#a84800" stroke-width="0.6"/><rect x="7" y="4" width="2" height="6" fill="#111"/><rect x="7" y="11.5" width="2" height="2" fill="#111"/></svg>
<svg style="position:absolute;left:1673px;top:561px;" width="16" height="16" viewBox="0 0 16 16"><defs><radialGradient id="wg" cx="40%" cy="30%" r="70%"><stop offset="0" stop-color="#ffb04a"/><stop offset="1" stop-color="#d85a00"/></radialGradient></defs><path d="M8 1C5 1 2 9 1.5 12.5 1.3 14.5 3 15 8 15s6.7-.5 6.5-2.5C14 9 11 1 8 1z" fill="url(#wg)" stroke="#a84800" stroke-width="0.6"/><rect x="7" y="4" width="2" height="6" fill="#111"/><rect x="7" y="11.5" width="2" height="2" fill="#111"/></svg>
<svg style="position:absolute;left:1672px;top:582px;" width="18" height="17" viewBox="0 0 18 17"><path d="M2 1l5 5" stroke="#8a5a20" stroke-width="2.2"/><path d="M6 5l3-1 7 7-3 5-8-6z" fill="#f0d840" stroke="#b09020" stroke-width="0.7"/><path d="M6 5l3-1" stroke="#c03030" stroke-width="1.5"/></svg>
<svg style="position:absolute;left:1673px;top:611px;" width="16" height="16" viewBox="0 0 16 16"><defs><radialGradient id="cg" cx="40%" cy="35%" r="65%"><stop offset="0" stop-color="#ffe070"/><stop offset="1" stop-color="#d09000"/></radialGradient></defs><circle cx="8" cy="8" r="7" fill="url(#cg)" stroke="#b07800" stroke-width="0.6"/><path d="M10.5 5.2A3.2 3.2 0 1 0 10.5 10.8" fill="none" stroke="#fff" stroke-width="1.6"/><path d="M4.5 7h4M4.5 9h4" stroke="#fff" stroke-width="1"/></svg>
<svg style="position:absolute;left:1673px;top:633px;" width="16" height="16" viewBox="0 0 16 16"><defs><radialGradient id="cg" cx="40%" cy="35%" r="65%"><stop offset="0" stop-color="#ffe070"/><stop offset="1" stop-color="#d09000"/></radialGradient></defs><circle cx="8" cy="8" r="7" fill="url(#cg)" stroke="#b07800" stroke-width="0.6"/><path d="M10.5 5.2A3.2 3.2 0 1 0 10.5 10.8" fill="none" stroke="#fff" stroke-width="1.6"/><path d="M4.5 7h4M4.5 9h4" stroke="#fff" stroke-width="1"/></svg>
<svg style="position:absolute;left:1674px;top:661px;" width="18" height="17" viewBox="0 0 18 17"><defs><linearGradient id="cg1674661" x1="0" y1="0" x2="0.3" y2="1"><stop offset="0" stop-color="#f2f2f2"/><stop offset="1" stop-color="#c8c8c8"/></linearGradient></defs><path d="M9.5 3.5V1.5h3.5v3" fill="none" stroke="#9a9a9a" stroke-width="1.2"/><path d="M1.5 5.5Q1.5 3.5 3.5 3.5H12.5V10.5H3.5Q1.5 10.5 1.5 8.5z" fill="url(#cg1674661)" stroke="#b0b0b0" stroke-width="0.7"/><path d="M3 10.5l-0.5 3M12 10.5v3" stroke="#999" stroke-width="1"/><circle cx="2.5" cy="14" r="1.3" fill="#aaa"/><circle cx="12" cy="14" r="1.3" fill="#aaa"/><path d="M13 8.5v7M9.5 12h7" stroke="#999" stroke-width="3.6"/><path d="M13 9v6M10 12h6" stroke="#dcdcdc" stroke-width="1.8"/></svg>
<svg style="position:absolute;left:1674px;top:683px;" width="18" height="17" viewBox="0 0 18 17"><defs><linearGradient id="cg1674683" x1="0" y1="0" x2="0.3" y2="1"><stop offset="0" stop-color="#ececff"/><stop offset="1" stop-color="#9c9ce0"/></linearGradient></defs><path d="M9.5 3.5V1.5h3.5v3" fill="none" stroke="#9a9a9a" stroke-width="1.2"/><path d="M1.5 5.5Q1.5 3.5 3.5 3.5H12.5V10.5H3.5Q1.5 10.5 1.5 8.5z" fill="url(#cg1674683)" stroke="#8080b8" stroke-width="0.7"/><path d="M3 10.5l-0.5 3M12 10.5v3" stroke="#999" stroke-width="1"/><circle cx="2.5" cy="14" r="1.3" fill="#333"/><circle cx="12" cy="14" r="1.3" fill="#333"/><path d="M13 8.5v7M9.5 12h7" stroke="#0a6a0a" stroke-width="3.6"/><path d="M13 9v6M10 12h6" stroke="#22b022" stroke-width="1.8"/></svg>
<svg style="position:absolute;left:1674px;top:711px;" width="18" height="17" viewBox="0 0 18 17"><defs><linearGradient id="cg1674711" x1="0" y1="0" x2="0.3" y2="1"><stop offset="0" stop-color="#ececff"/><stop offset="1" stop-color="#9c9ce0"/></linearGradient></defs><path d="M9.5 3.5V1.5h3.5v3" fill="none" stroke="#9a9a9a" stroke-width="1.2"/><path d="M1.5 5.5Q1.5 3.5 3.5 3.5H12.5V10.5H3.5Q1.5 10.5 1.5 8.5z" fill="url(#cg1674711)" stroke="#8080b8" stroke-width="0.7"/><path d="M3 10.5l-0.5 3M12 10.5v3" stroke="#999" stroke-width="1"/><circle cx="2.5" cy="14" r="1.3" fill="#333"/><circle cx="12" cy="14" r="1.3" fill="#333"/></svg>
<svg style="position:absolute;left:1674px;top:733px;" width="18" height="17" viewBox="0 0 18 17"><defs><linearGradient id="cg1674733" x1="0" y1="0" x2="0.3" y2="1"><stop offset="0" stop-color="#ececff"/><stop offset="1" stop-color="#9c9ce0"/></linearGradient></defs><path d="M9.5 3.5V1.5h3.5v3" fill="none" stroke="#9a9a9a" stroke-width="1.2"/><path d="M1.5 5.5Q1.5 3.5 3.5 3.5H12.5V10.5H3.5Q1.5 10.5 1.5 8.5z" fill="url(#cg1674733)" stroke="#8080b8" stroke-width="0.7"/><path d="M3 10.5l-0.5 3M12 10.5v3" stroke="#999" stroke-width="1"/><circle cx="2.5" cy="14" r="1.3" fill="#333"/><circle cx="12" cy="14" r="1.3" fill="#333"/></svg>
<svg style="position:absolute;left:1672px;top:760px;" width="18" height="17" viewBox="0 0 18 17"><path d="M2 1l5 5" stroke="#8a5a20" stroke-width="2.2"/><path d="M6 5l3-1 7 7-3 5-8-6z" fill="#f0d840" stroke="#b09020" stroke-width="0.7"/><path d="M6 5l3-1" stroke="#c03030" stroke-width="1.5"/></svg>
<svg style="position:absolute;left:1672px;top:781px;" width="18" height="17" viewBox="0 0 18 17"><rect x="1" y="1" width="4" height="4" fill="#0a0"/><rect x="6" y="7" width="4" height="4" fill="#0a0"/><rect x="12" y="12" width="5" height="5" fill="#0a0"/><path d="M3 5v4h3M8 11v3h4M12 3h4v5" fill="none" stroke="#111" stroke-width="1.3"/><path d="M10 3l2-2v4z" fill="#111"/></svg>
<svg style="position:absolute;left:1676px;top:814px;" width="10" height="11" viewBox="0 0 10 11"><path d="M0.5 0.5L9.5 5.5 0.5 10.5z" fill="#1e7ae6"/></svg>
<svg style="position:absolute;left:1676px;top:836px;" width="10" height="11" viewBox="0 0 10 11"><path d="M0.5 0.5L9.5 5.5 0.5 10.5z" fill="#1e7ae6"/></svg>
<svg style="position:absolute;left:1676px;top:858px;" width="10" height="11" viewBox="0 0 10 11"><path d="M0.5 0.5L9.5 5.5 0.5 10.5z" fill="#1e7ae6"/></svg>
<svg style="position:absolute;left:1676px;top:880px;" width="10" height="11" viewBox="0 0 10 11"><path d="M0.5 0.5L9.5 5.5 0.5 10.5z" fill="#1e7ae6"/></svg>
<svg style="position:absolute;left:1671px;top:899px;" width="18" height="15" viewBox="0 0 18 15"><path d="M1 3h5l1.5 1.5H15v9H1z" fill="#f4c430" stroke="#a07810" stroke-width="0.8"/><path d="M3 7h14l-2 6.5H1z" fill="#ffe27a" stroke="#a07810" stroke-width="0.8"/></svg>
<svg style="position:absolute;left:2220px;top:664px;" width="6" height="9" viewBox="0 0 6 9"><path d="M0.5 0.5l5 4-5 4z" fill="#999"/></svg>
<svg style="position:absolute;left:2220px;top:901px;" width="6" height="9" viewBox="0 0 6 9"><path d="M0.5 0.5l5 4-5 4z" fill="#333"/></svg>
<div style="left:30px;top:1325px;width:2193px;height:26px;background:#efefef;border-top:1px solid #d4d6dc;border-right:1px solid #c8c8c8;"></div>
<div style="left:41px;top:1326px;width:1px;height:25px;background:#d0d0d0;"></div>
<div style="left:44px;top:1328px;width:86px;height:20px;background:#e6e9ea;border:1px solid #d9dcdd;"></div>
<div style="left:-873px;width:1000px;text-align:right;top:1330.30px;height:17px;line-height:17px;font-size:12.3px;color:#111;font-weight:400;white-space:pre;">10</div>
<div style="left:1708px;top:1328px;width:89px;height:20px;background:#e6e9ea;border:1px solid #d9dcdd;"></div>
<div style="left:792px;width:1000px;text-align:right;top:1330.30px;height:17px;line-height:17px;font-size:12.3px;color:#111;font-weight:400;white-space:pre;">70.093,04</div>
<div style="left:30px;top:1351px;width:2326px;height:25px;background:#efefef;border-top:1px solid #c0c0c0;"></div>
<div style="left:35px;top:1356px;width:15px;height:15px;background:#cf4b55;"></div>
<svg style="position:absolute;left:38px;top:1359px;" width="9" height="9" viewBox="0 0 9 9"><path d="M1.5 1.5l6 6M7.5 1.5l-6 6" stroke="#fff" stroke-width="1.6"/></svg>
<div style="left:55px;top:1357px;width:14px;height:14px;background:#fff;border:1px solid #333;"></div>
<svg style="position:absolute;left:56px;top:1358px;" width="12" height="12" viewBox="0 0 12 12"><path d="M2 6l3 3 5-6" fill="none" stroke="#222" stroke-width="1.3"/></svg>
<div style="left:77px;top:1355.80px;height:17px;line-height:17px;font-size:12.3px;color:#111;font-weight:400;white-space:pre;">(Fertigungsartikel = Falsch)</div>
<div style="left:236px;top:1355px;width:17px;height:17px;background:#e6e6e6;border:1px solid #b8b8b8;"></div>
<svg style="position:absolute;left:239px;top:1361px;" width="11" height="7" viewBox="0 0 11 7"><path d="M1 1l4.5 4.5L10 1" fill="none" stroke="#555" stroke-width="1.1"/></svg>
<div style="left:29px;top:1376px;width:2328px;height:1px;background:#8f939c;"></div>
<div style="left:27px;top:1377px;width:2333px;height:23px;background:#ececec;"></div>
<div style="left:0px;top:1377px;width:27px;height:23px;background:#bcbecd;"></div>
<div style="left:27px;top:1381px;width:2330px;height:1px;background:#a0a0a0;"></div>
<div style="left:27px;top:1398px;width:2333px;height:2px;background:#fff;"></div>
<div style="left:27px;top:1382px;width:61px;height:16px;border-left:1px solid #a8a8a8;"></div>
<div style="left:91px;top:1382px;width:176px;height:16px;border-left:1px solid #a8a8a8;"></div>
<div style="left:270px;top:1382px;width:80px;height:16px;border-left:1px solid #a8a8a8;"></div>
<div style="left:353px;top:1382px;width:176px;height:16px;border-left:1px solid #a8a8a8;"></div>
<div style="left:532px;top:1382px;width:103px;height:16px;border-left:1px solid #a8a8a8;"></div>
<div style="left:727px;top:1382px;width:76px;height:16px;border-left:1px solid #a8a8a8;"></div>
<div style="left:806px;top:1382px;width:96px;height:16px;border-left:1px solid #a8a8a8;"></div>
<div style="left:905px;top:1382px;width:101px;height:16px;border-left:1px solid #a8a8a8;"></div>
<div style="left:1009px;top:1382px;width:101px;height:16px;border-left:1px solid #a8a8a8;"></div>
<div style="left:1113px;top:1382px;width:1243px;height:16px;border-left:1px solid #a8a8a8;"></div>
<div style="left:-918px;width:1000px;text-align:right;top:1383.30px;height:17px;line-height:17px;font-size:12px;color:#111;font-weight:400;white-space:pre;">Erstellt:</div>
<div style="left:94px;top:1383.30px;height:17px;line-height:17px;font-size:12px;color:#111;font-weight:400;white-space:pre;">2025-11-26  Steffen Angrick</div>
<div style="left:-661px;width:1000px;text-align:right;top:1383.30px;height:17px;line-height:17px;font-size:12px;color:#111;font-weight:400;white-space:pre;">Bearbeitet:</div>
<div style="left:355px;top:1383.30px;height:17px;line-height:17px;font-size:12px;color:#111;font-weight:400;white-space:pre;">2025-11-26  Steffen Angrick</div>
<div style="left:-371px;width:1000px;text-align:right;top:1383.30px;height:17px;line-height:17px;font-size:12px;color:#111;font-weight:400;white-space:pre;">Wiedervorlage:</div>
<div style="left:640px;top:1384px;width:83px;height:14px;background:linear-gradient(#fff,#e8ecf2);border:1px solid #9aa0aa;border-radius:2px;"></div>
<div style="left:-319px;width:2000px;text-align:center;top:1382.80px;height:14px;line-height:14px;font-size:10px;color:#111;font-weight:700;white-space:pre;">**</div>
<div style="left:676px;top:1395px;width:10px;height:1px;background:#111;"></div>
<div style="left:-235px;width:2000px;text-align:center;top:1383.30px;height:17px;line-height:17px;font-size:12px;color:#1a1aff;font-weight:400;white-space:pre;text-decoration:underline;">Dokument</div>
<div style="left:-146px;width:2000px;text-align:center;top:1383.30px;height:17px;line-height:17px;font-size:12px;color:#1a1aff;font-weight:400;white-space:pre;text-decoration:underline;">Notizen</div>
<div style="left:-45px;width:2000px;text-align:center;top:1383.30px;height:17px;line-height:17px;font-size:12px;color:#ff1a1a;font-weight:400;white-space:pre;text-decoration:underline;">Eigenschaften</div>
<div style="left:60px;width:2000px;text-align:center;top:1383.30px;height:17px;line-height:17px;font-size:12px;color:#ff1a1a;font-weight:400;white-space:pre;text-decoration:underline;">Softlink</div>
<div style="left:2px;top:1320px;width:22px;height:21px;background:#e2e2e4;border:1px solid #a8a8b0;"></div>
<svg style="position:absolute;left:4px;top:1322px;" width="19" height="17" viewBox="0 0 19 17"><path d="M4 2h9c2 0 3 1 2.5 3l-1 1.5-1 8H2l2-11z" fill="#f4f4fc" stroke="#8888a8" stroke-width="0.7"/><path d="M1 13c0-2 3-2 4-1l-1 3H1z" fill="#d8d8f0" stroke="#8888a8" stroke-width="0.6"/><circle cx="15.5" cy="3.5" r="1.8" fill="#c8c8f0" stroke="#777" stroke-width="0.6"/><path d="M13.5 8.5v8M9.5 12.5h8" stroke="#0a7a0a" stroke-width="3.8"/><path d="M13.5 9.2v6.6M10.2 12.5h6.6" stroke="#5fe05f" stroke-width="1.8"/></svg>
<div style="left:3px;top:1347px;width:20px;height:2px;background:#ffffff;border-bottom:1px solid #9a9aa8;"></div>
<div style="left:2px;top:1353px;width:22px;height:21px;background:#e2e2e4;border:1px solid #a8a8b0;"></div>
<svg style="position:absolute;left:7px;top:1356px;" width="12" height="15" viewBox="0 0 12 15"><rect x="0.5" y="0.5" width="11" height="14" fill="#fff" stroke="#666" stroke-width="1"/><path d="M2 2.5h8M2 4.5h8M2 6.5h8M2 8.5h8" stroke="#7aa0d0" stroke-width="1"/><rect x="2" y="10" width="8" height="3" fill="#3a78c8"/></svg>
<div style="left:2px;top:1377px;width:22px;height:21px;background:#e2e2e4;border:1px solid #a8a8b0;"></div>
<svg style="position:absolute;left:5px;top:1380px;" width="16" height="16" viewBox="0 0 16 16"><defs><radialGradient id="rg" cx="50%" cy="70%" r="65%"><stop offset="0" stop-color="#ffd080"/><stop offset="0.35" stop-color="#ff7040"/><stop offset="1" stop-color="#f02000"/></radialGradient></defs><path d="M5 1h6l4 4v6l-4 4H5l-4-4V5z" fill="url(#rg)" stroke="#e01000" stroke-width="0.8"/><ellipse cx="8" cy="5" rx="4.5" ry="2.5" fill="#ff9a80" opacity="0.6"/></svg>
<div style="left:0px;top:897px;width:6px;height:190px;background:#03558f;border-radius:0 3px 3px 0;box-shadow:1px 1px 2px rgba(0,0,0,0.4);"></div>
<div style="left:0px;top:987px;width:2px;height:2px;background:#fff;"></div>
<div style="left:0px;top:990px;width:2px;height:2px;background:#fff;"></div>
<div style="left:0px;top:993px;width:2px;height:2px;background:#fff;"></div>
<div style="left:0px;top:1400px;width:2360px;height:40px;background:#111111;"></div>
<div style="left:114px;top:1400px;width:48px;height:40px;background:#333333;"></div>
<div style="left:0px;top:1438px;width:11px;height:2px;background:#76b9ed;"></div>
<div style="left:69px;top:1438px;width:40px;height:2px;background:#76b9ed;"></div>
<div style="left:114px;top:1438px;width:48px;height:2px;background:#76b9ed;"></div>
<div style="left:167px;top:1438px;width:40px;height:2px;background:#76b9ed;"></div>
<div style="left:0px;top:1412px;width:1px;height:18px;background:#f0d060;"></div>
<svg style="position:absolute;left:28px;top:1407px;" width="24" height="25" viewBox="0 0 24 25"><defs><linearGradient id="ff" x1="0.8" y1="0" x2="0.2" y2="1"><stop offset="0" stop-color="#ffd83a"/><stop offset="0.45" stop-color="#ff8a1a"/><stop offset="1" stop-color="#e8207a"/></linearGradient><radialGradient id="fg" cx="50%" cy="40%" r="60%"><stop offset="0" stop-color="#9a5af0"/><stop offset="1" stop-color="#5a2ac0"/></radialGradient></defs><path d="M12 3.5c3-3 3.5-3 4.5-2.5c1 3 6 5 6 11.5A10.5 10.5 0 1 1 3 6.5c0 2 1 3 2 3.5C6 7 9 5 12 3.5z" fill="url(#ff)"/><circle cx="12.5" cy="13" r="5" fill="url(#fg)"/><path d="M7 11c2-3 6-4 8-2-2-.5-4 0-5 2z" fill="#ffb030"/></svg>
<svg style="position:absolute;left:76px;top:1407px;" width="26" height="25" viewBox="0 0 26 25"><path d="M2 3l11-3v25L2 22z" fill="#0a64c8"/><rect x="12" y="6" width="12" height="12" fill="#1a8ae8"/><path d="M12 6l6 6 6-6" fill="none" stroke="#fff" stroke-width="1.5"/><ellipse cx="7.5" cy="12.5" rx="3" ry="4" fill="none" stroke="#fff" stroke-width="1.8"/></svg>
<svg style="position:absolute;left:126px;top:1409px;" width="24" height="20" viewBox="0 0 24 20"><rect x="0" y="0" width="24" height="20" rx="3" fill="#1a78b8"/><rect x="4" y="2" width="18" height="16" rx="2" fill="#2aa0e0"/><rect x="6" y="3" width="14" height="14" rx="1" fill="#fff"/><path d="M6 3h5l5 7-5 7H6l5-7z" fill="#2a90d0"/></svg>
<svg style="position:absolute;left:175px;top:1408px;" width="24" height="24" viewBox="0 0 24 24"><circle cx="12" cy="12" r="11" fill="#f4f4f4"/><g stroke-linecap="round" stroke-width="2.6"><path d="M5 10h6" stroke="#36c5f0"/><path d="M10 5.2v0.1" stroke="#36c5f0"/><path d="M14 4v6" stroke="#2eb67d"/><path d="M18.8 10h0.1" stroke="#2eb67d"/><path d="M13 14h6" stroke="#ecb22e"/><path d="M14 18.8v0.1" stroke="#ecb22e"/><path d="M10 14v6" stroke="#e01e5a"/><path d="M5.2 14h0.1" stroke="#e01e5a"/></g></svg>
<div style="left:2115px;top:1412px;width:1px;height:16px;background:#555;"></div>
<div style="left:2118px;top:1412px;width:1px;height:16px;background:#555;"></div>
<div style="left:1150px;width:2000px;text-align:center;top:1411.80px;height:17px;line-height:17px;font-size:12px;color:#e0e0e0;font-weight:400;white-space:pre;">Desktop</div>
<svg style="position:absolute;left:2179px;top:1406px;" width="12" height="8" viewBox="0 0 12 8"><path d="M1 1l3 3-3 3M6 1l3 3-3 3" fill="none" stroke="#fff" stroke-width="1.2"/></svg>
<svg style="position:absolute;left:2198px;top:1414px;" width="14" height="9" viewBox="0 0 14 9"><path d="M1 8l6-6 6 6" fill="none" stroke="#e0e0e0" stroke-width="1.4"/></svg>
<svg style="position:absolute;left:2220px;top:1413px;" width="18" height="15" viewBox="0 0 18 15"><rect x="3.5" y="1.5" width="13" height="9" fill="none" stroke="#e0e0e0" stroke-width="1.2"/><path d="M10 11v3M6 14h8" stroke="#e0e0e0" stroke-width="1.2"/><rect x="0.5" y="0.5" width="5" height="4" fill="#111" stroke="#e0e0e0" stroke-width="0.8"/></svg>
<div style="left:1273px;width:2000px;text-align:center;top:1403.30px;height:17px;line-height:17px;font-size:12px;color:#e8e8e8;font-weight:400;white-space:pre;">10:54</div>
<div style="left:1274px;width:2000px;text-align:center;top:1421.80px;height:16px;line-height:16px;font-size:11.5px;color:#e8e8e8;font-weight:400;white-space:pre;">27.11.2025</div>
<svg style="position:absolute;left:2318px;top:1412px;" width="20" height="17" viewBox="0 0 20 17"><path d="M1.5 1.5h15v10h-4l-3 3v-3h-8z" fill="#e8e8e8"/><path d="M4 4.5h10M4 7h10M4 9.5h7" stroke="#111" stroke-width="1"/><circle cx="15" cy="13" r="3" fill="#111" stroke="#e8e8e8"/></svg>
<div style="left:2355px;top:1400px;width:1px;height:40px;background:#555;"></div>
<svg style="position:absolute;left:50px;top:0px;" width="24" height="23" viewBox="0 0 24 23"><path d="M0.5 4A10.5 7.5 0 0 1 0.5 19z" fill="#1a78d8"/><path d="M0 0L7 2.5 0 7.5z" fill="#d82020"/><path d="M0 15.5L7 20.5 0 23z" fill="#f8a820"/><path d="M10 2.5h4M12 11.5h3M10 20.5h4" stroke="#c8c8c8" stroke-width="1.6"/><rect x="16" y="0" width="6" height="4" fill="#10a030"/><rect x="16" y="9.5" width="6" height="4" fill="#10a030"/><rect x="16" y="18.5" width="6" height="4" fill="#10a030"/></svg>
<svg style="position:absolute;left:74px;top:0px;" width="23" height="23" viewBox="0 0 23 23"><rect x="0.5" y="0.5" width="21" height="21" rx="3" fill="#eef4ff" stroke="#7a98d8" stroke-width="1.2"/><path d="M4 3h9M6 5h2M8 7h8M8 9h3M6 12h3M8 14h3M6 16h3M4 19h4" stroke="#667" stroke-width="0.9"/><path d="M15 12v9M10.5 16.5h9" stroke="#20a020" stroke-width="3.4"/><path d="M15 12.5v8M11 16.5h8" stroke="#6fe06f" stroke-width="1.6"/></svg>
<svg style="position:absolute;left:98px;top:0px;" width="23" height="23" viewBox="0 0 23 23"><rect x="0.5" y="0.5" width="21" height="21" rx="3" fill="#eef4ff" stroke="#7a98d8" stroke-width="1.2"/><path d="M3 12l2 -1 3 7 4-14h8" fill="none" stroke="#111" stroke-width="1.4"/><text x="16" y="17" font-size="11" font-style="italic" fill="#111" text-anchor="middle" font-family="Liberation Serif">x</text></svg>
<svg style="position:absolute;left:122px;top:2px;" width="23" height="19" viewBox="0 0 23 19"><rect x="0" y="5" width="6" height="5" rx="1.5" transform="rotate(35 3 7.5)" fill="#2a2a2a"/><rect x="17" y="3" width="6" height="5" rx="1.5" transform="rotate(-40 20 5.5)" fill="#1a3aa8"/><ellipse cx="11.5" cy="11" rx="7.5" ry="5.5" transform="rotate(-10 11.5 11)" fill="#f89a48"/><path d="M6 9c2-2 6-3 10-1M8 13c2 1 5 1 8-1" fill="none" stroke="#d86a20" stroke-width="0.8"/></svg>
<svg style="position:absolute;left:147px;top:0px;" width="23" height="23" viewBox="0 0 23 23"><path d="M2 6h14l2 9H5z" fill="#d8d8f0" stroke="#9a9ac0" stroke-width="1"/><rect x="6" y="1" width="8" height="6" fill="#e0e0f0" stroke="#aaa" stroke-width="0.7"/><circle cx="5" cy="20" r="2" fill="#555"/><circle cx="12" cy="20" r="2" fill="#555"/><circle cx="16" cy="16" r="6" fill="#3a8ae0" stroke="#ddd" stroke-width="1.2"/><text x="16" y="20" font-size="10" font-weight="700" fill="#fff" text-anchor="middle" font-family="Liberation Sans">?</text></svg>
<svg style="position:absolute;left:170px;top:0px;" width="23" height="23" viewBox="0 0 23 23"><path d="M4 2c2-1 10-1 13 1s1 3 0 4l-2 11c-3 2-10 2-13 0z" fill="#f0f0ff" stroke="#a0a0c0" stroke-width="0.8"/><path d="M16 12v10M11 17h10" stroke="#109010" stroke-width="3.6"/><path d="M16 12.5v9M11.5 17h9" stroke="#5fe05f" stroke-width="1.6"/></svg>
<svg style="position:absolute;left:195px;top:0px;" width="21" height="23" viewBox="0 0 21 23"><path d="M1 7h17l-2 9H4z" fill="#d0d0f0" stroke="#9090b8" stroke-width="1"/><rect x="5" y="4" width="5" height="6" fill="#f07050"/><rect x="9" y="2" width="6" height="7" fill="#50c060"/><circle cx="5" cy="20" r="2" fill="#555"/><circle cx="14" cy="20" r="2" fill="#555"/></svg>
<svg style="position:absolute;left:218px;top:1px;" width="21" height="21" viewBox="0 0 21 21"><rect x="0.5" y="0.5" width="19" height="19" fill="#f4f2ff" stroke="#707070" stroke-width="1"/><rect x="1" y="7" width="18" height="6" fill="#fbb040"/><path d="M7 1v18M13 1v18M1 7h18M1 13h18" stroke="#9a9a9a" stroke-width="1"/><rect x="1" y="1" width="6" height="6" fill="#fff"/><rect x="7.5" y="1" width="5.5" height="6" fill="#fff"/><path d="M11 10l7 7" stroke="#4a5ac0" stroke-width="4" stroke-linecap="round"/><path d="M11 10l6 6" stroke="#f0f0ff" stroke-width="2.4" stroke-linecap="round"/></svg>
<svg style="position:absolute;left:242px;top:0px;" width="22" height="22" viewBox="0 0 22 22"><path d="M1 10l6-4v3l6-4v3l6-4v17H1z" fill="#f07a4a" stroke="#b04a20" stroke-width="0.7"/><path d="M1 10l6-4v3l6-4v3l6-4" fill="none" stroke="#666" stroke-width="2.2"/><rect x="15" y="0" width="3" height="7" fill="#e05a3a"/><rect x="9" y="15" width="4" height="6" fill="#555"/><circle cx="6" cy="6" r="5.5" fill="#4a9ae8" stroke="#ddd" stroke-width="1"/><text x="6" y="9.5" font-size="9" font-weight="700" fill="#fff" text-anchor="middle" font-family="Liberation Sans">?</text></svg>
<svg style="position:absolute;left:266px;top:0px;" width="22" height="22" viewBox="0 0 22 22"><path d="M1 10l6-4v3l6-4v3l6-4v17H1z" fill="#f07a4a" stroke="#b04a20" stroke-width="0.7"/><path d="M1 10l6-4v3l6-4v3l6-4" fill="none" stroke="#666" stroke-width="2.2"/><rect x="15" y="0" width="3" height="7" fill="#e05a3a"/><rect x="9" y="15" width="4" height="6" fill="#555"/></svg>
<svg style="position:absolute;left:291px;top:0px;" width="20" height="23" viewBox="0 0 20 23"><path d="M2 2l4-2h12v20l-4 2H2z" fill="#d8d8f8" stroke="#9a9ac8" stroke-width="0.8"/><rect x="4" y="3" width="10" height="8" fill="#fff" stroke="#aab" stroke-width="0.6"/><rect x="4" y="12" width="10" height="8" fill="#fff" stroke="#aab" stroke-width="0.6"/><path d="M8 6h2M8 15h2" stroke="#446" stroke-width="1.2"/></svg>
<svg style="position:absolute;left:315px;top:1px;" width="21" height="21" viewBox="0 0 21 21"><rect x="0.5" y="0.5" width="19" height="19" fill="#f4f2ff" stroke="#707070" stroke-width="1"/><rect x="1" y="7" width="18" height="6" fill="#fbb040"/><path d="M7 1v18M13 1v18M1 7h18M1 13h18" stroke="#9a9a9a" stroke-width="1"/><rect x="1" y="1" width="6" height="6" fill="#fff"/><rect x="7.5" y="1" width="5.5" height="6" fill="#fff"/><path d="M11 10l7 7" stroke="#4a5ac0" stroke-width="4" stroke-linecap="round"/><path d="M11 10l6 6" stroke="#f0f0ff" stroke-width="2.4" stroke-linecap="round"/></svg>
<svg style="position:absolute;left:338px;top:1px;" width="22" height="21" viewBox="0 0 22 21"><path d="M3 4l12-4 6 13-12 7z" fill="#d8b020" stroke="#8a6a10" stroke-width="0.8"/><path d="M3 4l6 16" stroke="#f8f0c0" stroke-width="1.2"/><rect x="10" y="5" width="5" height="3" transform="rotate(-20 12 6)" fill="#fff"/><circle cx="19" cy="8" r="1.3" fill="#e03030"/><circle cx="20" cy="12" r="1.3" fill="#f0d020"/><circle cx="20.5" cy="15" r="1.3" fill="#30b030"/></svg>
<svg style="position:absolute;left:362px;top:2px;" width="23" height="20" viewBox="0 0 23 20"><path d="M2 7l5-5h6l3 4-5 6H5z" fill="#c8c8c8" stroke="#999" stroke-width="0.8"/><path d="M9 10l5-3h6l2 4v5l-5 3h-6l-2-4z" fill="#d8d8d8" stroke="#999" stroke-width="0.8"/><ellipse cx="15" cy="13" rx="3" ry="2" fill="#888"/></svg>
<svg style="position:absolute;left:387px;top:1px;" width="21" height="21" viewBox="0 0 21 21"><rect x="0.5" y="0.5" width="19" height="19" fill="#f4f2ff" stroke="#707070" stroke-width="1"/><rect x="1" y="7" width="18" height="6" fill="#fbb040"/><path d="M7 1v18M13 1v18M1 7h18M1 13h18" stroke="#9a9a9a" stroke-width="1"/><rect x="1" y="1" width="6" height="6" fill="#fff"/><rect x="7.5" y="1" width="5.5" height="6" fill="#fff"/></svg>
<svg style="position:absolute;left:413px;top:8px;" width="7" height="8" viewBox="0 0 7 8"><path d="M0.5 1h6" stroke="#aab" stroke-width="1"/><path d="M0.5 3.5h6L3.5 7z" fill="#aab"/></svg></body></html>
